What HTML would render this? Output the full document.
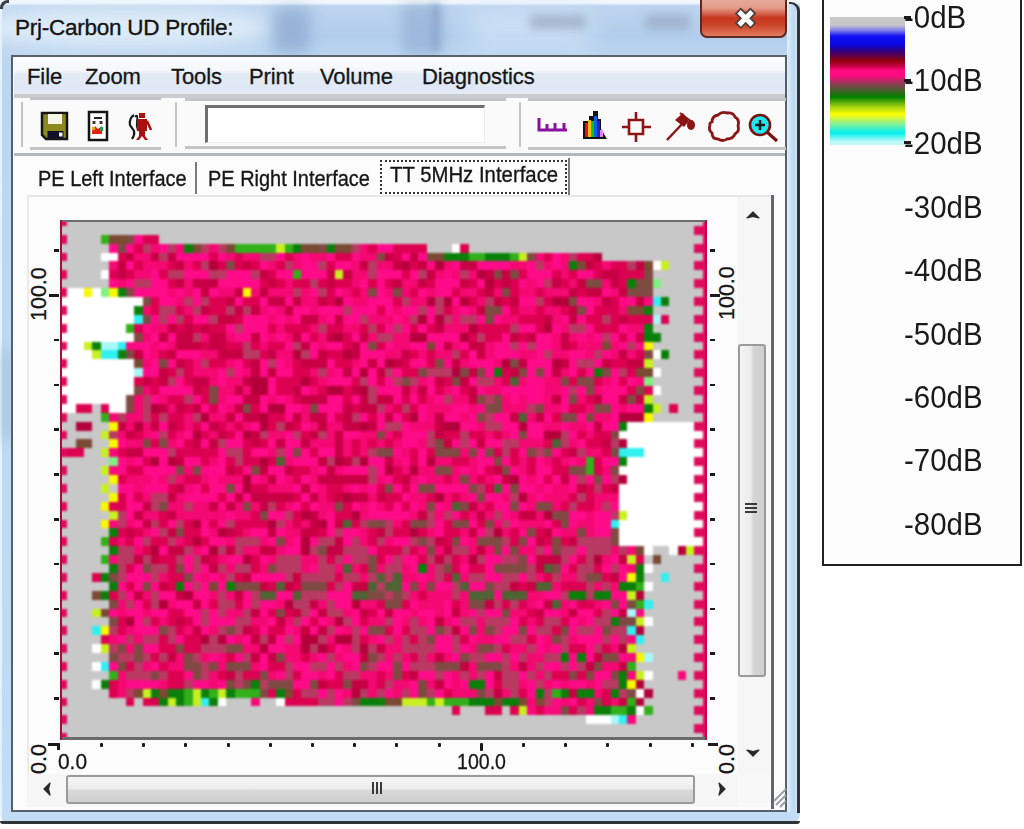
<!DOCTYPE html>
<html><head><meta charset="utf-8">
<style>
*{margin:0;padding:0;box-sizing:border-box}
html,body{width:1024px;height:829px;overflow:hidden;background:#fff;font-family:"Liberation Sans",sans-serif;color:#1a1a1a}
.a{position:absolute}
#frame{left:0px;top:-10px;width:800px;height:834px;border-radius:10px;
 background:linear-gradient(180deg,#f2f7fc 0px,#f2f7fc 13px,#bcd4ee 16px,#b2cdec 45px,#bcd6f0 66px,#c2dcf4 100%);overflow:hidden}
#title{left:15px;top:15px;font-size:22.5px;color:#141414;letter-spacing:-0.25px;-webkit-text-stroke:0.35px #141414}
#close{left:700px;top:-4px;width:87px;height:42px;border:2px solid #5b2a22;border-top:none;border-radius:0 0 7px 7px;
 background:linear-gradient(180deg,#eab0a2 0%,#e49a88 30%,#d2604a 45%,#c8361e 55%,#cc4428 72%,#e27a5c 100%)}
#client{left:11px;top:55px;width:776px;height:757px;border:2.5px solid #56616c;background:#fbfbfb}
#menu{left:13.5px;top:57.5px;width:771px;height:36px;background:linear-gradient(180deg,#fcfdfe 0%,#f4f7fb 35%,#e2eaf5 45%,#dfe8f4 85%,#e6edf7 100%)}
.mi{top:64px;font-size:22px;color:#161616;letter-spacing:-0.1px;-webkit-text-stroke:0.3px #161616}
.gl{position:absolute;background:#c4c4c4}
.tab{position:absolute;font-size:22px;color:#161616;-webkit-text-stroke:0.35px #161616;transform-origin:0 0;transform:scaleX(0.86);white-space:nowrap}
.lab{position:absolute;font-size:21px;color:#161616;-webkit-text-stroke:0.3px #161616;transform-origin:0 0;white-space:nowrap}
.db{position:absolute;font-size:32px;color:#1a1a1a;transform-origin:0 0;transform:scaleX(0.92);white-space:nowrap;left:904px;margin-top:-1.5px}
.tk{position:absolute;background:#1a1a1a}
</style></head><body>
<div id="wrap" style="position:absolute;left:0;top:0;width:1024px;height:829px;overflow:hidden;filter:blur(0.45px)">
<div id="frame" class="a">
 <div class="a" style="left:0;top:0;width:2px;height:100%;background:#e6f2fb"></div>
 <div class="a" style="left:0;top:10px;width:800px;height:3px;background:#f2f7fc"></div>
 <div class="a" style="left:-20px;top:18px;width:290px;height:40px;background:#e4f0fa;filter:blur(10px);opacity:.9;border-radius:40%"></div>
 <div class="a" style="left:274px;top:18px;width:36px;height:45px;background:#8eaad0;filter:blur(7px);opacity:.75"></div>
 <div class="a" style="left:402px;top:15px;width:40px;height:50px;background:#94b0d4;filter:blur(6px);opacity:.7"></div>
 <div class="a" style="left:431px;top:14px;width:9px;height:46px;background:#86a2c8;filter:blur(3px);opacity:.6"></div>
 <div class="a" style="left:470px;top:18px;width:120px;height:40px;background:#d4e6f8;filter:blur(12px);opacity:.7"></div>
 <div class="a" style="left:530px;top:25px;width:55px;height:14px;background:#8c9cb4;filter:blur(5px);opacity:.6"></div>
 <div class="a" style="left:645px;top:25px;width:45px;height:14px;background:#8c9cb4;filter:blur(5px);opacity:.55"></div>
 <div class="a" style="left:0;top:360px;width:12px;height:90px;background:#94b2d4;filter:blur(8px);opacity:.6"></div>
 <div class="a" style="left:776px;top:300px;width:22px;height:110px;background:#9ab8da;filter:blur(8px);opacity:.6"></div>
</div>
<div class="a" style="left:787px;top:4px;width:10px;height:808px;background:linear-gradient(90deg,#e2f0fa 0%,#c6def4 45%,#bcd8f0 80%,#d6eaf8 100%)"></div>
<div class="a" style="left:789px;top:1.5px;width:11px;height:811px;border-right:3px solid #2e3338;border-top:2.5px solid #2e3338;border-top-right-radius:9px"></div>
<div class="a" style="left:0;top:821px;width:800px;height:3px;background:#2e3338;border-radius:0 0 4px 4px"></div>
<div class="a" style="left:0;top:0;width:9px;height:9px;border-top:3px solid #3a3f44;border-left:3px solid #3a3f44;border-radius:8px 0 0 0"></div>
<div class="a" id="title">Prj-Carbon UD Profile:</div>
<div id="close" class="a"><svg width="87" height="40" style="position:absolute;left:-2px;top:4px" viewBox="0 0 87 40">
<path d="M40.8 13.5 L50.4 23.1 M50.4 13.5 L40.8 23.1" stroke="#4a3e3c" stroke-width="8.5" stroke-linecap="square" fill="none"/>
<path d="M40.8 13.5 L50.4 23.1 M50.4 13.5 L40.8 23.1" stroke="#fff" stroke-width="5" stroke-linecap="square" fill="none"/></svg></div>
<div id="client" class="a"></div>
<div id="menu" class="a"></div>
<div class="a" style="left:13.5px;top:93.5px;width:771px;height:4.5px;background:#c9cdd2"></div>
<div class="a mi" style="left:27px">File</div>
<div class="a mi" style="left:85px">Zoom</div>
<div class="a mi" style="left:171px">Tools</div>
<div class="a mi" style="left:249px">Print</div>
<div class="a mi" style="left:320px">Volume</div>
<div class="a mi" style="left:422px">Diagnostics</div>

<!-- toolbar -->
<div class="a" style="left:13.5px;top:98px;width:771px;height:54px;background:#fafafa"></div>
<div class="gl" style="left:30px;top:97px;width:131px;height:3px"></div>
<div class="gl" style="left:30px;top:147px;width:131px;height:3px"></div>
<div class="gl" style="left:20.5px;top:102px;width:2.5px;height:45px"></div>
<div class="gl" style="left:174.5px;top:102px;width:2.5px;height:45px"></div>
<div class="gl" style="left:185px;top:98px;width:321px;height:3px"></div>
<div class="gl" style="left:185px;top:146px;width:321px;height:3px"></div>
<div class="gl" style="left:518.5px;top:102px;width:2.5px;height:45px"></div>
<div class="gl" style="left:528px;top:98px;width:258px;height:3px"></div>
<div class="gl" style="left:528px;top:147px;width:258px;height:3px"></div>
<div class="a" style="left:205px;top:105px;width:280px;height:38px;background:#fff;border-top:3px solid #6e6e6e;border-left:3px solid #6e6e6e;border-right:1px solid #ececec;border-bottom:1px solid #ececec"></div>
<div class="a" style="left:13.5px;top:152.5px;width:771px;height:3px;background:#b4b8bc"></div>
<!-- toolbar icons -->
<svg class="a" style="left:38px;top:108px" width="122" height="36" viewBox="0 0 122 36">
 <path d="M4 5h25v26h-21l-4-4z" fill="#8a8a1e" stroke="#141414" stroke-width="2.5"/>
 <rect x="10" y="6" width="14" height="10" fill="#f4f4e8"/>
 <rect x="9.5" y="23" width="16" height="7" fill="#10102a"/>
 <rect x="21" y="24.5" width="3.5" height="4" fill="#f0f0e0"/>
 <rect x="51" y="4" width="18" height="28" fill="#fff" stroke="#141414" stroke-width="2.5"/>
 <rect x="56" y="9" width="8" height="2" fill="#222"/>
 <rect x="54.5" y="13" width="3" height="3" fill="#4a3a2a"/><rect x="61.5" y="13" width="3" height="3" fill="#4a3a2a"/>
 <path d="M54 23l3-5 3 3 4-3v8h-10z" fill="#e81e10"/><rect x="54" y="19" width="3" height="3" fill="#f0a000"/><rect x="62" y="19" width="3" height="4" fill="#20a040"/>
 <path d="M96 7q-5 3-4 10l4 6q1 4-2 8" stroke="#1a1a1a" stroke-width="2.2" fill="none"/>
 <path d="M97 9q3-4 2 4q-1 5 1 10" stroke="#1a1a1a" stroke-width="1.8" fill="none"/>
 <rect x="101" y="5" width="6" height="5" fill="#a81010"/>
 <path d="M99 11h10v12h-2v5l3 4h-3l-3-4-3 4h-3l3-4v-5h-2z" fill="#a81010"/>
 <path d="M109 13l4 9" stroke="#a81010" stroke-width="2.5"/>
</svg>
<svg class="a" style="left:534px;top:106px" width="250" height="38" viewBox="0 0 250 38">
 <path d="M5 12v12h28M5 24 M13 18v6M21 17v7M30 17v7" stroke="#8a10a0" stroke-width="3" fill="none"/>
 <path d="M49 33v-18h6v-5h4v-5h5v8h3v10l6 10z" fill="#111"/>
 <rect x="51" y="17" width="3" height="14" fill="#f01010"/><rect x="54" y="14" width="3" height="17" fill="#f0c000"/>
 <rect x="57" y="15" width="3" height="16" fill="#10c010"/><rect x="60" y="10" width="3" height="21" fill="#1060f0"/>
 <rect x="63" y="15" width="3" height="16" fill="#2020c0"/><rect x="66" y="24" width="3" height="7" fill="#f080f0"/>
 <path d="M95 14h14v14h-14z M102 6v8 M102 28v8 M88 21h7 M109 21h8" stroke="#8b1414" stroke-width="2.6" fill="none"/>
 <path d="M133 34l16-17" stroke="#8b1414" stroke-width="2.5"/>
 <path d="M141 14l8-7 6 8-5 6z" fill="#8b1414"/>
 <path d="M146 7l12 9" stroke="#8b1414" stroke-width="2"/><ellipse cx="157" cy="19" rx="4" ry="5" fill="#8b1414"/>
 <path d="M178 16q0-6 6-7q4-4 9-2q6-1 8 4q5 3 3 9q2 5-3 8q-2 5-8 5q-4 3-9 0q-6 0-6-6q-4-3-2-8q-1-2 2-3z" stroke="#8b1414" stroke-width="2.8" fill="none"/>
 <circle cx="226" cy="19" r="10" fill="#20e8f0" stroke="#7a1010" stroke-width="2.6"/>
 <path d="M221 19h10M226 14v10" stroke="#1a1a1a" stroke-width="2.5"/>
 <path d="M233 26l10 9" stroke="#7a1010" stroke-width="3.2"/>
</svg>

<!-- tab strip & page -->
<div class="a" style="left:13.5px;top:155.5px;width:771px;height:653px;background:#fcfcfc"></div>
<div class="a" style="left:194.5px;top:162px;width:2.5px;height:32px;background:#7a7a7a"></div>
<div class="a" style="left:567.5px;top:158px;width:2.5px;height:37px;background:#7a7a7a"></div>
<div class="a" style="left:380px;top:160px;width:187px;height:34px;border:2px dotted #333"></div>
<div class="a" style="left:27px;top:195px;width:746px;height:2px;background:#e6e6e6"></div>
<div class="a" style="left:27px;top:195px;width:2px;height:612px;background:#ebebeb"></div>
<div class="a" style="left:770.5px;top:195px;width:3px;height:614px;background:#62676d"></div>
<div class="tab" style="left:38px;top:166px;transform:scaleX(0.907)">PE Left Interface</div>
<div class="tab" style="left:207.5px;top:166px;transform:scaleX(0.907)">PE Right Interface</div>
<div class="tab" style="left:390px;top:162px;transform:scaleX(0.925)">TT 5MHz Interface</div>

<!-- plot -->
<div class="a" style="left:60px;top:221px;width:647px;height:519px;overflow:hidden;background:#c8c8c8">
<svg class="a" style="left:-1.5px;top:-4.2px;filter:blur(0.9px)" width="652.08" height="525.1" viewBox="0 0 78 59" preserveAspectRatio="none" shape-rendering="crispEdges">
<path fill="#de0a5c" d="M0 0h1v1h-1zM77 0h1v1h-1zM76 1h2v1h-2zM0 2h1v1h-1zM77 2h1v1h-1zM76 3h2v1h-2zM0 4h1v1h-1zM77 4h1v1h-1zM76 5h2v1h-2zM0 6h1v1h-1zM77 6h1v1h-1zM76 7h2v1h-2zM0 8h1v1h-1zM77 8h1v1h-1zM76 9h2v1h-2zM0 10h1v1h-1zM77 10h1v1h-1zM76 11h2v1h-2zM0 12h1v1h-1zM77 12h1v1h-1zM76 13h2v1h-2zM0 14h1v1h-1zM77 14h1v1h-1zM76 15h2v1h-2zM0 16h1v1h-1zM77 16h1v1h-1zM76 17h2v1h-2zM0 18h1v1h-1zM77 18h1v1h-1zM76 19h2v1h-2zM0 20h1v1h-1zM77 20h1v1h-1zM76 21h2v1h-2zM0 22h1v1h-1zM77 22h1v1h-1zM76 23h2v1h-2zM0 24h1v1h-1zM77 24h1v1h-1zM76 25h2v1h-2zM0 26h1v1h-1zM77 26h1v1h-1zM76 27h2v1h-2zM0 28h1v1h-1zM77 28h1v1h-1zM76 29h2v1h-2zM0 30h1v1h-1zM77 30h1v1h-1zM76 31h2v1h-2zM0 32h1v1h-1zM77 32h1v1h-1zM76 33h2v1h-2zM0 34h1v1h-1zM77 34h1v1h-1zM76 35h2v1h-2zM0 36h1v1h-1zM77 36h1v1h-1zM76 37h2v1h-2zM0 38h1v1h-1zM77 38h1v1h-1zM76 39h2v1h-2zM0 40h1v1h-1zM77 40h1v1h-1zM76 41h2v1h-2zM0 42h1v1h-1zM77 42h1v1h-1zM76 43h2v1h-2zM0 44h1v1h-1zM77 44h1v1h-1zM76 45h2v1h-2zM0 46h1v1h-1zM77 46h1v1h-1zM76 47h2v1h-2zM0 48h1v1h-1zM77 48h1v1h-1zM76 49h2v1h-2zM0 50h1v1h-1zM77 50h1v1h-1zM76 51h2v1h-2zM0 52h1v1h-1zM77 52h1v1h-1zM76 53h2v1h-2zM0 54h1v1h-1zM77 54h1v1h-1zM76 55h2v1h-2zM0 56h1v1h-1zM77 56h1v1h-1zM76 57h2v1h-2zM0 58h1v1h-1zM77 58h1v1h-1z"/>
<path fill="#c8c8c8" d="M1 0h76v1h-76zM0 1h76v1h-76zM1 2h4v1h-4zM12 2h65v1h-65zM0 3h6v1h-6zM44 3h3v1h-3zM49 3h27v1h-27zM1 4h4v1h-4zM65 4h12v1h-12zM0 5h6v1h-6zM73 5h3v1h-3zM1 6h4v1h-4zM71 6h6v1h-6zM0 7h6v1h-6zM72 7h4v1h-4zM71 8h6v1h-6zM73 9h3v1h-3zM71 10h6v1h-6zM73 11h3v1h-3zM71 12h6v1h-6zM72 13h4v1h-4zM71 14h6v1h-6zM73 15h3v1h-3zM71 16h6v1h-6zM72 17h4v1h-4zM71 18h6v1h-6zM72 19h4v1h-4zM71 20h6v1h-6zM4 21h1v1h-1zM72 21h1v1h-1zM74 21h2v1h-2zM1 22h4v1h-4zM71 22h6v1h-6zM0 23h2v1h-2zM4 23h2v1h-2zM1 24h4v1h-4zM0 25h2v1h-2zM4 25h2v1h-2zM3 26h2v1h-2zM0 27h6v1h-6zM1 28h4v1h-4zM0 29h6v1h-6zM1 30h4v1h-4zM6 30h1v1h-1zM0 31h6v1h-6zM1 32h4v1h-4zM0 33h6v1h-6zM1 34h4v1h-4zM0 35h6v1h-6zM1 36h4v1h-4zM0 37h6v1h-6zM71 37h2v1h-2zM1 38h4v1h-4zM70 38h1v1h-1zM72 38h5v1h-5zM0 39h6v1h-6zM71 39h5v1h-5zM1 40h3v1h-3zM70 40h2v1h-2zM73 40h4v1h-4zM0 41h6v1h-6zM71 41h5v1h-5zM1 42h3v1h-3zM70 42h7v1h-7zM0 43h6v1h-6zM71 43h5v1h-5zM1 44h3v1h-3zM70 44h7v1h-7zM0 45h6v1h-6zM71 45h5v1h-5zM1 46h3v1h-3zM70 46h7v1h-7zM0 47h5v1h-5zM70 47h6v1h-6zM1 48h3v1h-3zM69 48h8v1h-8zM0 49h6v1h-6zM71 49h5v1h-5zM1 50h3v1h-3zM69 50h8v1h-8zM0 51h6v1h-6zM71 51h3v1h-3zM75 51h1v1h-1zM1 52h3v1h-3zM70 52h7v1h-7zM0 53h6v1h-6zM71 53h5v1h-5zM1 54h7v1h-7zM9 54h1v1h-1zM20 54h3v1h-3zM24 54h2v1h-2zM70 54h7v1h-7zM0 55h47v1h-47zM48 55h3v1h-3zM53 55h1v1h-1zM71 55h5v1h-5zM1 56h62v1h-62zM69 56h8v1h-8zM0 57h76v1h-76zM1 58h76v1h-76z"/>
<path fill="#32b01a" d="M5 2h1v1h-1zM21 3h5v1h-5zM27 3h1v1h-1zM49 4h2v1h-2zM54 4h1v1h-1zM28 6h1v1h-1zM8 12h1v1h-1zM5 22h1v1h-1zM63 27h1v1h-1zM63 28h1v1h-1zM5 36h1v1h-1zM5 38h1v1h-1zM69 41h1v1h-1zM69 43h1v1h-1zM68 50h1v1h-1zM6 51h1v1h-1zM15 53h1v1h-1zM18 53h1v1h-1zM21 53h3v1h-3zM59 53h1v1h-1zM15 54h1v1h-1zM44 54h1v1h-1zM46 54h3v1h-3zM68 54h1v1h-1zM66 55h2v1h-2zM70 55h1v1h-1z"/>
<path fill="#7a4a32" d="M6 2h2v1h-2zM16 3h1v1h-1zM20 3h1v1h-1zM29 3h2v1h-2zM33 3h2v1h-2zM44 4h2v1h-2zM62 5h1v1h-1zM70 5h1v1h-1zM68 10h2v1h-2zM44 14h1v1h-1zM65 14h1v1h-1zM9 16h1v1h-1zM69 17h2v1h-2zM2 25h2v1h-2zM69 37h1v1h-1zM71 38h1v1h-1zM18 41h1v1h-1zM4 42h1v1h-1zM5 44h1v1h-1zM9 53h1v1h-1zM12 53h1v1h-1zM27 53h1v1h-1zM39 54h2v1h-2zM52 54h1v1h-1zM55 54h1v1h-1zM57 54h1v1h-1z"/>
<path fill="#7e4a42" d="M8 2h1v1h-1zM7 3h1v1h-1zM31 3h1v1h-1zM38 4h1v1h-1zM56 4h1v1h-1zM20 5h1v1h-1zM52 6h1v1h-1zM54 6h1v1h-1zM70 6h1v1h-1zM63 7h2v1h-2zM69 7h2v1h-2zM8 8h1v1h-1zM37 8h1v1h-1zM40 8h1v1h-1zM53 8h1v1h-1zM68 8h3v1h-3zM10 9h1v1h-1zM61 9h1v1h-1zM51 10h2v1h-2zM62 10h1v1h-1zM10 11h1v1h-1zM51 11h1v1h-1zM9 13h1v1h-1zM37 14h1v1h-1zM8 15h1v1h-1zM70 15h1v1h-1zM12 16h1v1h-1zM45 16h1v1h-1zM54 16h1v1h-1zM43 17h1v1h-1zM48 17h1v1h-1zM50 17h1v1h-1zM55 17h1v1h-1zM57 17h1v1h-1zM65 17h1v1h-1zM41 18h1v1h-1zM47 18h1v1h-1zM60 18h1v1h-1zM62 18h2v1h-2zM9 19h1v1h-1zM18 19h1v1h-1zM63 19h1v1h-1zM69 19h1v1h-1zM8 20h1v1h-1zM18 20h1v1h-1zM50 20h1v1h-1zM52 20h1v1h-1zM61 20h1v1h-1zM68 20h1v1h-1zM8 21h1v1h-1zM22 21h1v1h-1zM30 21h1v1h-1zM51 21h2v1h-2zM57 21h1v1h-1zM64 21h2v1h-2zM50 22h1v1h-1zM60 22h2v1h-2zM63 22h1v1h-1zM38 24h1v1h-1zM55 24h1v1h-1zM66 24h1v1h-1zM10 25h1v1h-1zM12 25h1v1h-1zM45 25h1v1h-1zM28 26h1v1h-1zM38 26h2v1h-2zM45 26h3v1h-3zM49 26h1v1h-1zM51 26h1v1h-1zM56 26h1v1h-1zM58 26h1v1h-1zM66 26h1v1h-1zM52 27h1v1h-1zM14 28h1v1h-1zM16 28h1v1h-1zM23 28h1v1h-1zM45 28h2v1h-2zM53 28h1v1h-1zM61 28h2v1h-2zM66 28h1v1h-1zM48 29h1v1h-1zM64 29h1v1h-1zM20 30h1v1h-1zM39 30h1v1h-1zM43 30h2v1h-2zM49 30h1v1h-1zM54 30h1v1h-1zM50 31h1v1h-1zM12 32h1v1h-1zM22 32h1v1h-1zM33 32h1v1h-1zM44 32h1v1h-1zM48 32h1v1h-1zM54 32h1v1h-1zM57 32h2v1h-2zM24 33h1v1h-1zM59 33h2v1h-2zM37 34h2v1h-2zM42 34h2v1h-2zM47 34h2v1h-2zM51 34h1v1h-1zM60 34h1v1h-1zM14 35h1v1h-1zM56 35h1v1h-1zM62 35h1v1h-1zM66 35h1v1h-1zM26 36h1v1h-1zM43 36h1v1h-1zM47 36h1v1h-1zM50 36h3v1h-3zM55 36h1v1h-1zM59 36h1v1h-1zM66 36h1v1h-1zM31 37h1v1h-1zM44 37h1v1h-1zM52 37h1v1h-1zM54 37h1v1h-1zM59 37h1v1h-1zM37 38h1v1h-1zM55 38h1v1h-1zM10 39h1v1h-1zM14 39h1v1h-1zM25 39h1v1h-1zM37 39h1v1h-1zM46 39h1v1h-1zM52 39h4v1h-4zM59 39h1v1h-1zM6 40h1v1h-1zM15 40h1v1h-1zM63 40h2v1h-2zM10 41h1v1h-1zM21 41h3v1h-3zM29 41h3v1h-3zM42 41h1v1h-1zM44 41h1v1h-1zM51 41h1v1h-1zM37 42h2v1h-2zM40 42h1v1h-1zM6 43h1v1h-1zM39 43h2v1h-2zM49 43h2v1h-2zM66 43h1v1h-1zM68 43h1v1h-1zM26 44h1v1h-1zM53 44h1v1h-1zM6 45h1v1h-1zM67 45h2v1h-2zM12 46h1v1h-1zM20 46h1v1h-1zM37 46h2v1h-2zM45 46h1v1h-1zM49 46h1v1h-1zM51 46h1v1h-1zM55 46h1v1h-1zM60 46h1v1h-1zM65 46h1v1h-1zM44 47h1v1h-1zM59 47h1v1h-1zM7 48h1v1h-1zM9 48h1v1h-1zM14 48h1v1h-1zM20 48h2v1h-2zM50 48h2v1h-2zM6 49h1v1h-1zM9 49h1v1h-1zM15 49h1v1h-1zM26 49h1v1h-1zM37 49h1v1h-1zM48 49h1v1h-1zM65 49h2v1h-2zM7 50h1v1h-1zM15 50h2v1h-2zM18 50h1v1h-1zM20 50h3v1h-3zM36 50h1v1h-1zM40 50h1v1h-1zM45 50h3v1h-3zM50 50h3v1h-3zM64 50h1v1h-1zM11 51h1v1h-1zM16 51h1v1h-1zM24 51h1v1h-1zM40 51h1v1h-1zM61 51h1v1h-1zM63 51h1v1h-1zM66 51h1v1h-1zM20 52h1v1h-1zM22 52h1v1h-1zM25 52h3v1h-3zM30 52h1v1h-1zM34 52h1v1h-1zM43 52h1v1h-1zM24 53h1v1h-1zM43 53h1v1h-1zM50 53h1v1h-1zM68 53h1v1h-1zM35 54h1v1h-1zM64 54h1v1h-1zM60 55h1v1h-1z"/>
<path fill="#ff0a88" d="M9 2h1v1h-1zM6 3h1v1h-1zM8 3h1v1h-1zM12 3h1v1h-1zM38 3h2v1h-2zM14 4h4v1h-4zM19 4h1v1h-1zM26 4h1v1h-1zM29 4h1v1h-1zM32 4h1v1h-1zM35 4h1v1h-1zM41 4h1v1h-1zM43 4h1v1h-1zM59 4h1v1h-1zM8 5h1v1h-1zM24 5h1v1h-1zM29 5h2v1h-2zM33 5h2v1h-2zM44 5h1v1h-1zM47 5h1v1h-1zM50 5h4v1h-4zM56 5h1v1h-1zM59 5h1v1h-1zM11 6h1v1h-1zM15 6h3v1h-3zM20 6h3v1h-3zM26 6h2v1h-2zM29 6h3v1h-3zM38 6h3v1h-3zM42 6h1v1h-1zM46 6h1v1h-1zM56 6h3v1h-3zM62 6h2v1h-2zM6 7h1v1h-1zM8 7h1v1h-1zM11 7h2v1h-2zM19 7h5v1h-5zM36 7h1v1h-1zM38 7h1v1h-1zM45 7h3v1h-3zM50 7h1v1h-1zM55 7h1v1h-1zM57 7h1v1h-1zM9 8h4v1h-4zM14 8h1v1h-1zM16 8h1v1h-1zM18 8h1v1h-1zM30 8h1v1h-1zM33 8h1v1h-1zM38 8h1v1h-1zM43 8h1v1h-1zM45 8h2v1h-2zM65 8h1v1h-1zM12 9h2v1h-2zM16 9h1v1h-1zM21 9h1v1h-1zM24 9h1v1h-1zM27 9h1v1h-1zM34 9h1v1h-1zM37 9h3v1h-3zM47 9h1v1h-1zM55 9h2v1h-2zM62 9h2v1h-2zM67 9h2v1h-2zM25 10h1v1h-1zM28 10h2v1h-2zM31 10h3v1h-3zM35 10h3v1h-3zM39 10h1v1h-1zM41 10h2v1h-2zM44 10h1v1h-1zM48 10h1v1h-1zM53 10h1v1h-1zM63 10h1v1h-1zM11 11h1v1h-1zM13 11h1v1h-1zM16 11h2v1h-2zM22 11h3v1h-3zM26 11h1v1h-1zM28 11h1v1h-1zM32 11h1v1h-1zM34 11h2v1h-2zM40 11h1v1h-1zM44 11h1v1h-1zM50 11h1v1h-1zM52 11h1v1h-1zM60 11h1v1h-1zM62 11h1v1h-1zM10 12h1v1h-1zM20 12h1v1h-1zM22 12h3v1h-3zM39 12h1v1h-1zM41 12h1v1h-1zM43 12h1v1h-1zM55 12h2v1h-2zM59 12h1v1h-1zM63 12h1v1h-1zM67 12h1v1h-1zM11 13h1v1h-1zM13 13h1v1h-1zM21 13h2v1h-2zM24 13h1v1h-1zM26 13h1v1h-1zM29 13h1v1h-1zM35 13h1v1h-1zM44 13h4v1h-4zM53 13h1v1h-1zM57 13h2v1h-2zM62 13h1v1h-1zM64 13h1v1h-1zM66 13h1v1h-1zM68 13h1v1h-1zM9 14h2v1h-2zM12 14h1v1h-1zM27 14h1v1h-1zM30 14h1v1h-1zM32 14h2v1h-2zM36 14h1v1h-1zM39 14h1v1h-1zM42 14h2v1h-2zM45 14h1v1h-1zM48 14h1v1h-1zM52 14h2v1h-2zM55 14h1v1h-1zM57 14h2v1h-2zM67 14h1v1h-1zM69 14h1v1h-1zM10 15h1v1h-1zM14 15h3v1h-3zM30 15h1v1h-1zM36 15h3v1h-3zM49 15h1v1h-1zM52 15h3v1h-3zM57 15h1v1h-1zM61 15h2v1h-2zM65 15h1v1h-1zM11 16h1v1h-1zM13 16h1v1h-1zM21 16h1v1h-1zM24 16h1v1h-1zM26 16h1v1h-1zM32 16h1v1h-1zM36 16h1v1h-1zM38 16h1v1h-1zM42 16h2v1h-2zM46 16h1v1h-1zM49 16h3v1h-3zM56 16h3v1h-3zM61 16h1v1h-1zM64 16h1v1h-1zM10 17h2v1h-2zM19 17h1v1h-1zM21 17h1v1h-1zM24 17h1v1h-1zM26 17h2v1h-2zM33 17h1v1h-1zM35 17h1v1h-1zM37 17h1v1h-1zM40 17h1v1h-1zM51 17h1v1h-1zM56 17h1v1h-1zM58 17h1v1h-1zM61 17h1v1h-1zM63 17h1v1h-1zM66 17h1v1h-1zM14 18h1v1h-1zM19 18h1v1h-1zM25 18h1v1h-1zM32 18h3v1h-3zM37 18h1v1h-1zM39 18h1v1h-1zM44 18h1v1h-1zM49 18h1v1h-1zM56 18h2v1h-2zM66 18h1v1h-1zM68 18h1v1h-1zM12 19h4v1h-4zM25 19h1v1h-1zM29 19h1v1h-1zM38 19h3v1h-3zM44 19h1v1h-1zM47 19h1v1h-1zM50 19h1v1h-1zM53 19h5v1h-5zM60 19h1v1h-1zM62 19h1v1h-1zM65 19h3v1h-3zM11 20h1v1h-1zM16 20h1v1h-1zM20 20h2v1h-2zM24 20h1v1h-1zM26 20h1v1h-1zM32 20h2v1h-2zM35 20h1v1h-1zM40 20h1v1h-1zM42 20h1v1h-1zM45 20h1v1h-1zM54 20h1v1h-1zM56 20h2v1h-2zM60 20h1v1h-1zM65 20h2v1h-2zM17 21h1v1h-1zM19 21h1v1h-1zM24 21h1v1h-1zM27 21h2v1h-2zM31 21h3v1h-3zM43 21h1v1h-1zM47 21h2v1h-2zM50 21h1v1h-1zM60 21h1v1h-1zM66 21h1v1h-1zM68 21h2v1h-2zM21 22h1v1h-1zM27 22h1v1h-1zM32 22h1v1h-1zM36 22h1v1h-1zM38 22h1v1h-1zM40 22h1v1h-1zM43 22h1v1h-1zM46 22h2v1h-2zM49 22h1v1h-1zM52 22h2v1h-2zM58 22h1v1h-1zM62 22h1v1h-1zM66 22h1v1h-1zM12 23h1v1h-1zM17 23h1v1h-1zM23 23h1v1h-1zM29 23h1v1h-1zM38 23h1v1h-1zM41 23h1v1h-1zM48 23h2v1h-2zM53 23h2v1h-2zM56 23h2v1h-2zM60 23h1v1h-1zM63 23h1v1h-1zM65 23h2v1h-2zM11 24h1v1h-1zM15 24h1v1h-1zM21 24h1v1h-1zM27 24h1v1h-1zM34 24h2v1h-2zM41 24h3v1h-3zM54 24h1v1h-1zM56 24h2v1h-2zM61 24h1v1h-1zM7 25h1v1h-1zM14 25h1v1h-1zM17 25h1v1h-1zM20 25h2v1h-2zM25 25h1v1h-1zM27 25h2v1h-2zM41 25h2v1h-2zM47 25h1v1h-1zM49 25h1v1h-1zM51 25h2v1h-2zM62 25h1v1h-1zM10 26h3v1h-3zM19 26h1v1h-1zM23 26h2v1h-2zM27 26h1v1h-1zM29 26h1v1h-1zM31 26h2v1h-2zM40 26h1v1h-1zM43 26h1v1h-1zM50 26h1v1h-1zM55 26h1v1h-1zM59 26h1v1h-1zM7 27h1v1h-1zM9 27h1v1h-1zM12 27h1v1h-1zM15 27h2v1h-2zM19 27h1v1h-1zM28 27h3v1h-3zM37 27h2v1h-2zM41 27h1v1h-1zM43 27h1v1h-1zM50 27h2v1h-2zM53 27h1v1h-1zM57 27h1v1h-1zM61 27h1v1h-1zM65 27h2v1h-2zM7 28h1v1h-1zM10 28h4v1h-4zM17 28h3v1h-3zM22 28h1v1h-1zM25 28h2v1h-2zM31 28h1v1h-1zM34 28h3v1h-3zM38 28h1v1h-1zM48 28h1v1h-1zM50 28h1v1h-1zM54 28h1v1h-1zM57 28h2v1h-2zM11 29h1v1h-1zM18 29h1v1h-1zM23 29h1v1h-1zM26 29h1v1h-1zM29 29h1v1h-1zM39 29h1v1h-1zM43 29h1v1h-1zM52 29h1v1h-1zM55 29h1v1h-1zM57 29h1v1h-1zM59 29h1v1h-1zM61 29h1v1h-1zM63 29h1v1h-1zM65 29h1v1h-1zM7 30h2v1h-2zM10 30h3v1h-3zM16 30h1v1h-1zM18 30h2v1h-2zM21 30h1v1h-1zM28 30h1v1h-1zM30 30h1v1h-1zM35 30h1v1h-1zM37 30h1v1h-1zM40 30h1v1h-1zM42 30h1v1h-1zM45 30h4v1h-4zM53 30h1v1h-1zM55 30h2v1h-2zM58 30h1v1h-1zM61 30h1v1h-1zM8 31h1v1h-1zM15 31h4v1h-4zM20 31h1v1h-1zM22 31h1v1h-1zM29 31h1v1h-1zM41 31h1v1h-1zM49 31h1v1h-1zM51 31h2v1h-2zM57 31h1v1h-1zM8 32h2v1h-2zM19 32h1v1h-1zM28 32h1v1h-1zM30 32h1v1h-1zM35 32h1v1h-1zM37 32h1v1h-1zM40 32h1v1h-1zM42 32h1v1h-1zM45 32h1v1h-1zM52 32h2v1h-2zM55 32h1v1h-1zM66 32h1v1h-1zM8 33h1v1h-1zM20 33h1v1h-1zM25 33h2v1h-2zM32 33h1v1h-1zM37 33h5v1h-5zM47 33h1v1h-1zM53 33h1v1h-1zM61 33h2v1h-2zM64 33h2v1h-2zM9 34h1v1h-1zM13 34h1v1h-1zM17 34h1v1h-1zM19 34h1v1h-1zM32 34h1v1h-1zM45 34h1v1h-1zM49 34h1v1h-1zM54 34h1v1h-1zM58 34h1v1h-1zM61 34h1v1h-1zM64 34h2v1h-2zM11 35h1v1h-1zM17 35h1v1h-1zM23 35h2v1h-2zM26 35h1v1h-1zM32 35h1v1h-1zM34 35h2v1h-2zM45 35h1v1h-1zM50 35h1v1h-1zM55 35h1v1h-1zM59 35h1v1h-1zM64 35h2v1h-2zM9 36h1v1h-1zM18 36h2v1h-2zM25 36h1v1h-1zM28 36h1v1h-1zM30 36h1v1h-1zM34 36h1v1h-1zM40 36h2v1h-2zM48 36h1v1h-1zM56 36h1v1h-1zM12 37h1v1h-1zM17 37h1v1h-1zM27 37h2v1h-2zM37 37h1v1h-1zM53 37h1v1h-1zM58 37h1v1h-1zM62 37h1v1h-1zM15 38h1v1h-1zM20 38h2v1h-2zM24 38h1v1h-1zM34 38h1v1h-1zM39 38h1v1h-1zM41 38h2v1h-2zM51 38h2v1h-2zM56 38h1v1h-1zM61 38h1v1h-1zM66 38h1v1h-1zM9 39h1v1h-1zM15 39h1v1h-1zM17 39h1v1h-1zM30 39h1v1h-1zM42 39h1v1h-1zM48 39h1v1h-1zM51 39h1v1h-1zM60 39h1v1h-1zM65 39h1v1h-1zM67 39h1v1h-1zM8 40h3v1h-3zM16 40h1v1h-1zM18 40h1v1h-1zM23 40h4v1h-4zM43 40h1v1h-1zM51 40h2v1h-2zM55 40h1v1h-1zM67 40h1v1h-1zM7 41h1v1h-1zM9 41h1v1h-1zM11 41h1v1h-1zM15 41h1v1h-1zM17 41h1v1h-1zM19 41h1v1h-1zM34 41h1v1h-1zM41 41h1v1h-1zM45 41h2v1h-2zM49 41h2v1h-2zM8 42h1v1h-1zM12 42h2v1h-2zM16 42h2v1h-2zM22 42h1v1h-1zM26 42h2v1h-2zM32 42h3v1h-3zM52 42h1v1h-1zM58 42h2v1h-2zM66 42h2v1h-2zM9 43h1v1h-1zM14 43h2v1h-2zM17 43h1v1h-1zM22 43h1v1h-1zM24 43h2v1h-2zM33 43h2v1h-2zM42 43h1v1h-1zM46 43h1v1h-1zM57 43h1v1h-1zM61 43h1v1h-1zM65 43h1v1h-1zM67 43h1v1h-1zM6 44h1v1h-1zM8 44h2v1h-2zM11 44h2v1h-2zM15 44h2v1h-2zM18 44h1v1h-1zM24 44h1v1h-1zM30 44h1v1h-1zM35 44h1v1h-1zM38 44h1v1h-1zM40 44h2v1h-2zM43 44h2v1h-2zM46 44h1v1h-1zM49 44h1v1h-1zM51 44h2v1h-2zM58 44h2v1h-2zM62 44h2v1h-2zM66 44h1v1h-1zM9 45h1v1h-1zM16 45h1v1h-1zM18 45h3v1h-3zM25 45h1v1h-1zM29 45h1v1h-1zM31 45h1v1h-1zM35 45h1v1h-1zM40 45h1v1h-1zM44 45h1v1h-1zM47 45h1v1h-1zM54 45h1v1h-1zM61 45h1v1h-1zM63 45h1v1h-1zM9 46h3v1h-3zM17 46h1v1h-1zM24 46h1v1h-1zM27 46h1v1h-1zM30 46h1v1h-1zM33 46h1v1h-1zM36 46h1v1h-1zM40 46h1v1h-1zM44 46h1v1h-1zM48 46h1v1h-1zM53 46h2v1h-2zM56 46h1v1h-1zM61 46h1v1h-1zM64 46h1v1h-1zM7 47h1v1h-1zM14 47h1v1h-1zM20 47h1v1h-1zM22 47h1v1h-1zM26 47h1v1h-1zM28 47h1v1h-1zM38 47h1v1h-1zM45 47h2v1h-2zM49 47h1v1h-1zM52 47h2v1h-2zM57 47h1v1h-1zM62 47h3v1h-3zM66 47h1v1h-1zM10 48h2v1h-2zM25 48h2v1h-2zM33 48h1v1h-1zM45 48h2v1h-2zM48 48h1v1h-1zM57 48h1v1h-1zM59 48h1v1h-1zM63 48h1v1h-1zM18 49h1v1h-1zM21 49h1v1h-1zM24 49h1v1h-1zM31 49h1v1h-1zM34 49h2v1h-2zM47 49h1v1h-1zM51 49h2v1h-2zM54 49h1v1h-1zM61 49h1v1h-1zM63 49h1v1h-1zM67 49h1v1h-1zM6 50h1v1h-1zM11 50h1v1h-1zM24 50h1v1h-1zM28 50h2v1h-2zM32 50h1v1h-1zM35 50h1v1h-1zM38 50h2v1h-2zM41 50h1v1h-1zM58 50h2v1h-2zM61 50h1v1h-1zM15 51h1v1h-1zM26 51h1v1h-1zM29 51h2v1h-2zM32 51h1v1h-1zM43 51h2v1h-2zM46 51h1v1h-1zM51 51h1v1h-1zM55 51h1v1h-1zM64 51h2v1h-2zM8 52h4v1h-4zM16 52h2v1h-2zM19 52h1v1h-1zM28 52h2v1h-2zM42 52h1v1h-1zM46 52h1v1h-1zM48 52h1v1h-1zM51 52h1v1h-1zM56 52h1v1h-1zM59 52h1v1h-1zM61 52h2v1h-2zM64 52h1v1h-1zM31 53h1v1h-1zM33 53h1v1h-1zM39 53h1v1h-1zM42 53h1v1h-1zM45 53h1v1h-1zM56 53h1v1h-1zM33 54h1v1h-1zM59 54h1v1h-1zM61 54h1v1h-1z"/>
<path fill="#dc0050" d="M10 2h2v1h-2zM9 3h1v1h-1zM37 3h1v1h-1zM7 4h1v1h-1zM18 4h1v1h-1zM21 4h1v1h-1zM27 4h1v1h-1zM33 4h2v1h-2zM40 4h1v1h-1zM58 4h1v1h-1zM62 4h2v1h-2zM9 5h1v1h-1zM13 5h1v1h-1zM16 5h1v1h-1zM19 5h1v1h-1zM21 5h1v1h-1zM23 5h1v1h-1zM26 5h1v1h-1zM32 5h1v1h-1zM42 5h1v1h-1zM64 5h1v1h-1zM66 5h2v1h-2zM6 6h1v1h-1zM8 6h1v1h-1zM12 6h1v1h-1zM25 6h1v1h-1zM41 6h1v1h-1zM55 6h1v1h-1zM59 6h1v1h-1zM61 6h1v1h-1zM64 6h1v1h-1zM67 6h3v1h-3zM13 7h1v1h-1zM24 7h1v1h-1zM26 7h1v1h-1zM28 7h2v1h-2zM31 7h1v1h-1zM33 7h2v1h-2zM37 7h1v1h-1zM39 7h1v1h-1zM44 7h1v1h-1zM49 7h1v1h-1zM52 7h1v1h-1zM54 7h1v1h-1zM60 7h1v1h-1zM67 7h1v1h-1zM32 8h1v1h-1zM35 8h1v1h-1zM42 8h1v1h-1zM47 8h1v1h-1zM50 8h1v1h-1zM54 8h1v1h-1zM57 8h1v1h-1zM62 8h1v1h-1zM11 9h1v1h-1zM18 9h2v1h-2zM22 9h2v1h-2zM32 9h1v1h-1zM40 9h1v1h-1zM49 9h1v1h-1zM53 9h1v1h-1zM58 9h1v1h-1zM66 9h1v1h-1zM11 10h1v1h-1zM14 10h1v1h-1zM18 10h2v1h-2zM38 10h1v1h-1zM46 10h1v1h-1zM54 10h1v1h-1zM57 10h1v1h-1zM60 10h1v1h-1zM64 10h3v1h-3zM15 11h1v1h-1zM21 11h1v1h-1zM55 11h3v1h-3zM63 11h2v1h-2zM66 11h1v1h-1zM68 11h2v1h-2zM9 12h1v1h-1zM14 12h1v1h-1zM16 12h1v1h-1zM18 12h2v1h-2zM25 12h1v1h-1zM27 12h3v1h-3zM32 12h2v1h-2zM36 12h1v1h-1zM38 12h1v1h-1zM42 12h1v1h-1zM44 12h1v1h-1zM50 12h4v1h-4zM57 12h1v1h-1zM64 12h3v1h-3zM30 13h1v1h-1zM34 13h1v1h-1zM49 13h1v1h-1zM51 13h2v1h-2zM55 13h1v1h-1zM67 13h1v1h-1zM17 14h1v1h-1zM20 14h2v1h-2zM23 14h1v1h-1zM25 14h2v1h-2zM34 14h1v1h-1zM38 14h1v1h-1zM61 14h1v1h-1zM12 15h1v1h-1zM24 15h1v1h-1zM32 15h2v1h-2zM42 15h1v1h-1zM44 15h1v1h-1zM48 15h1v1h-1zM69 15h1v1h-1zM15 16h1v1h-1zM18 16h2v1h-2zM22 16h1v1h-1zM28 16h1v1h-1zM33 16h2v1h-2zM41 16h1v1h-1zM44 16h1v1h-1zM66 16h2v1h-2zM13 17h1v1h-1zM15 17h1v1h-1zM28 17h2v1h-2zM41 17h2v1h-2zM53 17h1v1h-1zM62 17h1v1h-1zM68 17h1v1h-1zM11 18h1v1h-1zM15 18h1v1h-1zM26 18h3v1h-3zM30 18h1v1h-1zM35 18h1v1h-1zM38 18h1v1h-1zM46 18h1v1h-1zM53 18h1v1h-1zM61 18h1v1h-1zM64 18h1v1h-1zM67 18h1v1h-1zM11 19h1v1h-1zM17 19h1v1h-1zM26 19h2v1h-2zM31 19h1v1h-1zM34 19h1v1h-1zM45 19h1v1h-1zM48 19h1v1h-1zM68 19h1v1h-1zM13 20h2v1h-2zM17 20h1v1h-1zM28 20h1v1h-1zM34 20h1v1h-1zM41 20h1v1h-1zM43 20h1v1h-1zM63 20h1v1h-1zM15 21h1v1h-1zM18 21h1v1h-1zM23 21h1v1h-1zM35 21h1v1h-1zM40 21h1v1h-1zM42 21h1v1h-1zM61 21h2v1h-2zM11 22h1v1h-1zM13 22h2v1h-2zM25 22h2v1h-2zM33 22h1v1h-1zM37 22h1v1h-1zM41 22h1v1h-1zM59 22h1v1h-1zM14 23h1v1h-1zM16 23h1v1h-1zM19 23h1v1h-1zM21 23h1v1h-1zM25 23h1v1h-1zM28 23h1v1h-1zM9 24h1v1h-1zM13 24h1v1h-1zM17 24h1v1h-1zM20 24h1v1h-1zM29 24h1v1h-1zM40 24h1v1h-1zM46 24h2v1h-2zM49 24h2v1h-2zM52 24h1v1h-1zM62 24h1v1h-1zM64 24h2v1h-2zM11 25h1v1h-1zM15 25h1v1h-1zM22 25h1v1h-1zM24 25h1v1h-1zM35 25h1v1h-1zM37 25h1v1h-1zM39 25h1v1h-1zM58 25h1v1h-1zM63 25h2v1h-2zM7 26h1v1h-1zM14 26h5v1h-5zM22 26h1v1h-1zM30 26h1v1h-1zM35 26h1v1h-1zM42 26h1v1h-1zM44 26h1v1h-1zM52 26h1v1h-1zM54 26h1v1h-1zM60 26h1v1h-1zM65 26h1v1h-1zM10 27h1v1h-1zM17 27h1v1h-1zM20 27h1v1h-1zM22 27h2v1h-2zM25 27h1v1h-1zM42 27h1v1h-1zM47 27h2v1h-2zM54 27h1v1h-1zM56 27h1v1h-1zM59 27h1v1h-1zM64 27h1v1h-1zM8 28h2v1h-2zM21 28h1v1h-1zM28 28h2v1h-2zM40 28h1v1h-1zM51 28h1v1h-1zM56 28h1v1h-1zM59 28h2v1h-2zM64 28h1v1h-1zM7 29h1v1h-1zM15 29h2v1h-2zM28 29h1v1h-1zM40 29h1v1h-1zM46 29h1v1h-1zM50 29h1v1h-1zM58 29h1v1h-1zM13 30h1v1h-1zM17 30h1v1h-1zM23 30h2v1h-2zM32 30h2v1h-2zM38 30h1v1h-1zM41 30h1v1h-1zM51 30h1v1h-1zM63 30h1v1h-1zM65 30h1v1h-1zM7 31h1v1h-1zM9 31h1v1h-1zM19 31h1v1h-1zM28 31h1v1h-1zM32 31h1v1h-1zM39 31h2v1h-2zM44 31h1v1h-1zM47 31h1v1h-1zM61 31h1v1h-1zM63 31h1v1h-1zM7 32h1v1h-1zM26 32h1v1h-1zM29 32h1v1h-1zM34 32h1v1h-1zM39 32h1v1h-1zM41 32h1v1h-1zM51 32h1v1h-1zM60 32h1v1h-1zM62 32h2v1h-2zM12 33h1v1h-1zM23 33h1v1h-1zM28 33h1v1h-1zM33 33h2v1h-2zM48 33h1v1h-1zM12 34h1v1h-1zM15 34h1v1h-1zM18 34h1v1h-1zM21 34h4v1h-4zM28 34h1v1h-1zM35 34h1v1h-1zM41 34h1v1h-1zM46 34h1v1h-1zM50 34h1v1h-1zM59 34h1v1h-1zM7 35h1v1h-1zM9 35h1v1h-1zM15 35h2v1h-2zM21 35h1v1h-1zM31 35h1v1h-1zM37 35h1v1h-1zM40 35h2v1h-2zM43 35h1v1h-1zM46 35h2v1h-2zM54 35h1v1h-1zM57 35h1v1h-1zM8 36h1v1h-1zM11 36h2v1h-2zM15 36h1v1h-1zM17 36h1v1h-1zM37 36h1v1h-1zM46 36h1v1h-1zM54 36h1v1h-1zM58 36h1v1h-1zM60 36h1v1h-1zM10 37h1v1h-1zM38 37h3v1h-3zM42 37h1v1h-1zM12 38h2v1h-2zM18 38h1v1h-1zM23 38h1v1h-1zM32 38h1v1h-1zM38 38h1v1h-1zM43 38h1v1h-1zM47 38h1v1h-1zM62 38h1v1h-1zM8 39h1v1h-1zM13 39h1v1h-1zM23 39h1v1h-1zM36 39h1v1h-1zM47 39h1v1h-1zM49 39h2v1h-2zM61 39h1v1h-1zM64 39h1v1h-1zM13 40h2v1h-2zM21 40h1v1h-1zM33 40h1v1h-1zM46 40h1v1h-1zM58 40h1v1h-1zM65 40h1v1h-1zM8 41h1v1h-1zM13 41h1v1h-1zM25 41h1v1h-1zM28 41h1v1h-1zM32 41h1v1h-1zM55 41h1v1h-1zM60 41h3v1h-3zM43 42h1v1h-1zM10 43h1v1h-1zM18 43h1v1h-1zM21 43h1v1h-1zM38 43h1v1h-1zM41 43h1v1h-1zM47 43h1v1h-1zM53 43h1v1h-1zM55 43h1v1h-1zM62 43h2v1h-2zM13 44h2v1h-2zM25 44h1v1h-1zM27 44h1v1h-1zM37 44h1v1h-1zM56 44h1v1h-1zM64 44h1v1h-1zM7 45h1v1h-1zM11 45h1v1h-1zM13 45h1v1h-1zM15 45h1v1h-1zM30 45h1v1h-1zM36 45h1v1h-1zM55 45h1v1h-1zM57 45h1v1h-1zM60 45h1v1h-1zM7 46h1v1h-1zM14 46h1v1h-1zM23 46h1v1h-1zM25 46h2v1h-2zM39 46h1v1h-1zM41 46h1v1h-1zM59 46h1v1h-1zM12 47h1v1h-1zM15 47h2v1h-2zM36 47h1v1h-1zM42 47h1v1h-1zM48 47h1v1h-1zM56 47h1v1h-1zM12 48h2v1h-2zM15 48h2v1h-2zM32 48h1v1h-1zM53 48h1v1h-1zM61 48h2v1h-2zM65 48h1v1h-1zM11 49h1v1h-1zM20 49h1v1h-1zM29 49h1v1h-1zM42 49h1v1h-1zM8 50h1v1h-1zM12 50h1v1h-1zM25 50h2v1h-2zM13 51h2v1h-2zM19 51h1v1h-1zM22 51h2v1h-2zM28 51h1v1h-1zM33 51h1v1h-1zM38 51h1v1h-1zM41 51h1v1h-1zM59 51h2v1h-2zM62 51h1v1h-1zM13 52h2v1h-2zM32 52h2v1h-2zM38 52h1v1h-1zM52 52h1v1h-1zM6 53h1v1h-1zM28 53h1v1h-1zM46 53h1v1h-1zM55 53h1v1h-1zM65 53h1v1h-1zM30 54h1v1h-1zM62 54h1v1h-1zM65 54h1v1h-1zM61 55h1v1h-1z"/>
<path fill="#b83a62" d="M10 3h1v1h-1zM13 3h1v1h-1zM17 3h1v1h-1zM19 3h1v1h-1zM35 3h1v1h-1zM12 4h1v1h-1zM24 4h2v1h-2zM61 4h1v1h-1zM17 5h1v1h-1zM27 5h1v1h-1zM31 5h1v1h-1zM37 5h1v1h-1zM57 5h1v1h-1zM68 5h1v1h-1zM13 6h2v1h-2zM18 6h2v1h-2zM23 6h1v1h-1zM37 6h1v1h-1zM43 6h1v1h-1zM48 6h1v1h-1zM9 7h2v1h-2zM30 7h1v1h-1zM58 7h1v1h-1zM28 8h1v1h-1zM31 8h1v1h-1zM15 9h1v1h-1zM17 9h1v1h-1zM41 9h1v1h-1zM45 9h1v1h-1zM51 9h1v1h-1zM57 9h1v1h-1zM12 10h2v1h-2zM16 10h1v1h-1zM20 10h1v1h-1zM22 10h1v1h-1zM34 10h1v1h-1zM43 10h1v1h-1zM45 10h1v1h-1zM12 11h1v1h-1zM14 11h1v1h-1zM18 11h1v1h-1zM36 11h1v1h-1zM42 11h1v1h-1zM46 11h1v1h-1zM48 11h2v1h-2zM65 11h1v1h-1zM21 12h1v1h-1zM31 12h1v1h-1zM37 12h1v1h-1zM40 12h1v1h-1zM54 12h1v1h-1zM61 12h2v1h-2zM16 13h1v1h-1zM38 13h2v1h-2zM50 13h1v1h-1zM65 13h1v1h-1zM22 14h1v1h-1zM28 14h1v1h-1zM54 14h1v1h-1zM56 14h1v1h-1zM68 14h1v1h-1zM22 15h2v1h-2zM29 15h1v1h-1zM47 15h1v1h-1zM58 15h1v1h-1zM64 15h1v1h-1zM17 16h1v1h-1zM25 16h1v1h-1zM62 16h2v1h-2zM14 17h1v1h-1zM20 17h1v1h-1zM31 17h1v1h-1zM39 17h1v1h-1zM44 17h3v1h-3zM67 17h1v1h-1zM13 18h1v1h-1zM36 18h1v1h-1zM40 18h1v1h-1zM42 18h1v1h-1zM50 18h2v1h-2zM37 19h1v1h-1zM61 19h1v1h-1zM10 20h1v1h-1zM15 20h1v1h-1zM37 20h1v1h-1zM46 20h1v1h-1zM51 20h1v1h-1zM10 21h1v1h-1zM38 21h1v1h-1zM41 21h1v1h-1zM56 21h1v1h-1zM7 22h1v1h-1zM10 22h1v1h-1zM12 22h1v1h-1zM16 22h1v1h-1zM35 22h1v1h-1zM51 22h1v1h-1zM26 23h1v1h-1zM39 23h2v1h-2zM51 23h2v1h-2zM6 24h1v1h-1zM12 24h1v1h-1zM24 24h1v1h-1zM28 24h1v1h-1zM31 24h1v1h-1zM44 24h1v1h-1zM48 24h1v1h-1zM60 24h1v1h-1zM19 25h1v1h-1zM44 25h1v1h-1zM48 25h1v1h-1zM53 25h2v1h-2zM60 25h1v1h-1zM66 25h1v1h-1zM13 26h1v1h-1zM20 26h2v1h-2zM26 26h1v1h-1zM37 26h1v1h-1zM53 26h1v1h-1zM57 26h1v1h-1zM62 26h1v1h-1zM21 27h1v1h-1zM32 27h1v1h-1zM35 27h1v1h-1zM37 28h1v1h-1zM13 29h1v1h-1zM37 29h1v1h-1zM62 29h1v1h-1zM66 29h1v1h-1zM50 30h1v1h-1zM64 30h1v1h-1zM11 31h2v1h-2zM54 31h1v1h-1zM62 31h1v1h-1zM11 32h1v1h-1zM15 32h1v1h-1zM25 32h1v1h-1zM61 32h1v1h-1zM65 32h1v1h-1zM7 33h1v1h-1zM27 33h1v1h-1zM44 33h1v1h-1zM46 33h1v1h-1zM52 33h1v1h-1zM66 33h1v1h-1zM7 34h1v1h-1zM11 34h1v1h-1zM14 34h1v1h-1zM20 34h1v1h-1zM26 34h1v1h-1zM36 34h1v1h-1zM39 34h1v1h-1zM44 34h1v1h-1zM53 34h1v1h-1zM12 35h1v1h-1zM33 35h1v1h-1zM39 35h1v1h-1zM51 35h1v1h-1zM10 36h1v1h-1zM13 36h1v1h-1zM21 36h3v1h-3zM31 36h2v1h-2zM35 36h1v1h-1zM38 36h1v1h-1zM42 36h1v1h-1zM44 36h1v1h-1zM53 36h1v1h-1zM62 36h4v1h-4zM7 37h2v1h-2zM15 37h1v1h-1zM19 37h1v1h-1zM21 37h1v1h-1zM30 37h1v1h-1zM34 37h3v1h-3zM41 37h1v1h-1zM47 37h2v1h-2zM57 37h1v1h-1zM60 37h2v1h-2zM63 37h3v1h-3zM67 37h1v1h-1zM7 38h2v1h-2zM10 38h1v1h-1zM14 38h1v1h-1zM16 38h1v1h-1zM26 38h3v1h-3zM31 38h1v1h-1zM33 38h1v1h-1zM35 38h2v1h-2zM40 38h1v1h-1zM44 38h1v1h-1zM46 38h1v1h-1zM50 38h1v1h-1zM53 38h2v1h-2zM60 38h1v1h-1zM63 38h1v1h-1zM7 39h1v1h-1zM11 39h2v1h-2zM16 39h1v1h-1zM19 39h1v1h-1zM21 39h2v1h-2zM26 39h3v1h-3zM31 39h2v1h-2zM39 39h2v1h-2zM45 39h1v1h-1zM56 39h1v1h-1zM62 39h2v1h-2zM66 39h1v1h-1zM7 40h1v1h-1zM11 40h1v1h-1zM20 40h1v1h-1zM27 40h1v1h-1zM29 40h4v1h-4zM34 40h2v1h-2zM37 40h1v1h-1zM39 40h1v1h-1zM45 40h1v1h-1zM49 40h2v1h-2zM53 40h2v1h-2zM56 40h1v1h-1zM59 40h1v1h-1zM62 40h1v1h-1zM16 41h1v1h-1zM33 41h1v1h-1zM38 41h1v1h-1zM47 41h1v1h-1zM52 41h2v1h-2zM63 41h1v1h-1zM65 41h1v1h-1zM7 42h1v1h-1zM11 42h1v1h-1zM19 42h1v1h-1zM23 42h1v1h-1zM29 42h3v1h-3zM39 42h1v1h-1zM41 42h1v1h-1zM47 42h1v1h-1zM60 42h1v1h-1zM63 42h1v1h-1zM8 43h1v1h-1zM11 43h1v1h-1zM19 43h2v1h-2zM23 43h1v1h-1zM28 43h2v1h-2zM32 43h1v1h-1zM52 43h1v1h-1zM54 43h1v1h-1zM17 44h1v1h-1zM19 44h1v1h-1zM22 44h1v1h-1zM29 44h1v1h-1zM32 44h2v1h-2zM50 44h1v1h-1zM65 44h1v1h-1zM10 45h1v1h-1zM17 45h1v1h-1zM21 45h2v1h-2zM28 45h1v1h-1zM34 45h1v1h-1zM39 45h1v1h-1zM42 45h1v1h-1zM48 45h2v1h-2zM51 45h3v1h-3zM58 45h2v1h-2zM64 45h2v1h-2zM6 46h1v1h-1zM13 46h1v1h-1zM19 46h1v1h-1zM21 46h1v1h-1zM32 46h1v1h-1zM35 46h1v1h-1zM42 46h2v1h-2zM46 46h1v1h-1zM52 46h1v1h-1zM57 46h2v1h-2zM62 46h2v1h-2zM66 46h2v1h-2zM8 47h1v1h-1zM10 47h2v1h-2zM13 47h1v1h-1zM18 47h1v1h-1zM24 47h1v1h-1zM27 47h1v1h-1zM31 47h1v1h-1zM35 47h1v1h-1zM39 47h1v1h-1zM41 47h1v1h-1zM43 47h1v1h-1zM47 47h1v1h-1zM54 47h2v1h-2zM60 47h1v1h-1zM65 47h1v1h-1zM67 47h1v1h-1zM6 48h1v1h-1zM17 48h3v1h-3zM30 48h1v1h-1zM35 48h1v1h-1zM37 48h1v1h-1zM41 48h4v1h-4zM47 48h1v1h-1zM52 48h1v1h-1zM56 48h1v1h-1zM60 48h1v1h-1zM64 48h1v1h-1zM7 49h2v1h-2zM10 49h1v1h-1zM12 49h1v1h-1zM16 49h1v1h-1zM22 49h1v1h-1zM32 49h1v1h-1zM38 49h1v1h-1zM40 49h1v1h-1zM43 49h1v1h-1zM49 49h2v1h-2zM53 49h1v1h-1zM55 49h1v1h-1zM58 49h2v1h-2zM9 50h1v1h-1zM17 50h1v1h-1zM27 50h1v1h-1zM30 50h2v1h-2zM33 50h1v1h-1zM37 50h1v1h-1zM42 50h3v1h-3zM53 50h1v1h-1zM57 50h1v1h-1zM60 50h1v1h-1zM62 50h1v1h-1zM8 51h3v1h-3zM12 51h1v1h-1zM17 51h1v1h-1zM21 51h1v1h-1zM27 51h1v1h-1zM34 51h2v1h-2zM45 51h1v1h-1zM48 51h1v1h-1zM50 51h1v1h-1zM53 51h2v1h-2zM56 51h1v1h-1zM58 51h1v1h-1zM15 52h1v1h-1zM21 52h1v1h-1zM24 52h1v1h-1zM39 52h1v1h-1zM53 52h2v1h-2zM57 52h1v1h-1zM65 52h2v1h-2zM8 53h1v1h-1zM29 53h2v1h-2zM32 53h1v1h-1zM36 53h1v1h-1zM38 53h1v1h-1zM41 53h1v1h-1zM44 53h1v1h-1zM51 53h1v1h-1zM54 53h1v1h-1zM58 53h1v1h-1zM67 53h1v1h-1zM31 54h2v1h-2zM34 54h1v1h-1zM58 54h1v1h-1zM62 55h1v1h-1z"/>
<path fill="#f40872" d="M11 3h1v1h-1zM14 3h1v1h-1zM18 3h1v1h-1zM36 3h1v1h-1zM9 4h2v1h-2zM20 4h1v1h-1zM22 4h2v1h-2zM28 4h1v1h-1zM30 4h2v1h-2zM36 4h2v1h-2zM57 4h1v1h-1zM60 4h1v1h-1zM6 5h1v1h-1zM10 5h3v1h-3zM15 5h1v1h-1zM25 5h1v1h-1zM28 5h1v1h-1zM35 5h1v1h-1zM38 5h2v1h-2zM46 5h1v1h-1zM54 5h2v1h-2zM58 5h1v1h-1zM60 5h1v1h-1zM65 5h1v1h-1zM9 6h2v1h-2zM35 6h2v1h-2zM45 6h1v1h-1zM47 6h1v1h-1zM49 6h1v1h-1zM60 6h1v1h-1zM7 7h1v1h-1zM15 7h1v1h-1zM27 7h1v1h-1zM35 7h1v1h-1zM41 7h2v1h-2zM56 7h1v1h-1zM61 7h1v1h-1zM65 7h1v1h-1zM13 8h1v1h-1zM15 8h1v1h-1zM19 8h2v1h-2zM23 8h1v1h-1zM25 8h3v1h-3zM29 8h1v1h-1zM34 8h1v1h-1zM36 8h1v1h-1zM39 8h1v1h-1zM41 8h1v1h-1zM44 8h1v1h-1zM48 8h2v1h-2zM52 8h1v1h-1zM55 8h2v1h-2zM58 8h3v1h-3zM66 8h1v1h-1zM14 9h1v1h-1zM29 9h2v1h-2zM35 9h2v1h-2zM42 9h2v1h-2zM50 9h1v1h-1zM64 9h1v1h-1zM10 10h1v1h-1zM15 10h1v1h-1zM24 10h1v1h-1zM26 10h1v1h-1zM30 10h1v1h-1zM40 10h1v1h-1zM47 10h1v1h-1zM49 10h1v1h-1zM55 10h2v1h-2zM58 10h2v1h-2zM67 10h1v1h-1zM25 11h1v1h-1zM27 11h1v1h-1zM31 11h1v1h-1zM37 11h3v1h-3zM41 11h1v1h-1zM47 11h1v1h-1zM53 11h2v1h-2zM59 11h1v1h-1zM11 12h2v1h-2zM26 12h1v1h-1zM30 12h1v1h-1zM34 12h2v1h-2zM46 12h3v1h-3zM60 12h1v1h-1zM68 12h2v1h-2zM10 13h1v1h-1zM17 13h1v1h-1zM20 13h1v1h-1zM25 13h1v1h-1zM27 13h1v1h-1zM31 13h1v1h-1zM37 13h1v1h-1zM40 13h2v1h-2zM59 13h1v1h-1zM61 13h1v1h-1zM63 13h1v1h-1zM11 14h1v1h-1zM13 14h1v1h-1zM24 14h1v1h-1zM31 14h1v1h-1zM40 14h2v1h-2zM47 14h1v1h-1zM51 14h1v1h-1zM59 14h1v1h-1zM62 14h3v1h-3zM66 14h1v1h-1zM11 15h1v1h-1zM17 15h2v1h-2zM26 15h2v1h-2zM39 15h2v1h-2zM43 15h1v1h-1zM45 15h2v1h-2zM51 15h1v1h-1zM55 15h2v1h-2zM59 15h2v1h-2zM63 15h1v1h-1zM66 15h1v1h-1zM68 15h1v1h-1zM10 16h1v1h-1zM16 16h1v1h-1zM20 16h1v1h-1zM27 16h1v1h-1zM35 16h1v1h-1zM48 16h1v1h-1zM52 16h1v1h-1zM16 17h3v1h-3zM22 17h1v1h-1zM30 17h1v1h-1zM32 17h1v1h-1zM60 17h1v1h-1zM18 18h1v1h-1zM20 18h2v1h-2zM31 18h1v1h-1zM43 18h1v1h-1zM52 18h1v1h-1zM55 18h1v1h-1zM58 18h2v1h-2zM65 18h1v1h-1zM69 18h1v1h-1zM10 19h1v1h-1zM19 19h2v1h-2zM22 19h1v1h-1zM30 19h1v1h-1zM42 19h1v1h-1zM46 19h1v1h-1zM51 19h2v1h-2zM58 19h2v1h-2zM64 19h1v1h-1zM9 20h1v1h-1zM12 20h1v1h-1zM19 20h1v1h-1zM25 20h1v1h-1zM27 20h1v1h-1zM44 20h1v1h-1zM47 20h2v1h-2zM53 20h1v1h-1zM55 20h1v1h-1zM58 20h1v1h-1zM62 20h1v1h-1zM9 21h1v1h-1zM13 21h1v1h-1zM20 21h1v1h-1zM29 21h1v1h-1zM39 21h1v1h-1zM44 21h3v1h-3zM49 21h1v1h-1zM53 21h3v1h-3zM58 21h2v1h-2zM63 21h1v1h-1zM67 21h1v1h-1zM6 22h1v1h-1zM8 22h2v1h-2zM15 22h1v1h-1zM18 22h2v1h-2zM29 22h1v1h-1zM44 22h1v1h-1zM48 22h1v1h-1zM56 22h1v1h-1zM64 22h2v1h-2zM8 23h1v1h-1zM10 23h1v1h-1zM15 23h1v1h-1zM20 23h1v1h-1zM22 23h1v1h-1zM30 23h1v1h-1zM32 23h2v1h-2zM42 23h3v1h-3zM50 23h1v1h-1zM58 23h2v1h-2zM61 23h2v1h-2zM7 24h1v1h-1zM10 24h1v1h-1zM14 24h1v1h-1zM18 24h1v1h-1zM25 24h2v1h-2zM32 24h1v1h-1zM36 24h2v1h-2zM39 24h1v1h-1zM51 24h1v1h-1zM53 24h1v1h-1zM63 24h1v1h-1zM8 25h2v1h-2zM13 25h1v1h-1zM30 25h3v1h-3zM34 25h1v1h-1zM36 25h1v1h-1zM38 25h1v1h-1zM40 25h1v1h-1zM43 25h1v1h-1zM55 25h3v1h-3zM61 25h1v1h-1zM25 26h1v1h-1zM34 26h1v1h-1zM36 26h1v1h-1zM41 26h1v1h-1zM48 26h1v1h-1zM63 26h2v1h-2zM8 27h1v1h-1zM18 27h1v1h-1zM27 27h1v1h-1zM40 27h1v1h-1zM45 27h2v1h-2zM49 27h1v1h-1zM55 27h1v1h-1zM58 27h1v1h-1zM60 27h1v1h-1zM62 27h1v1h-1zM15 28h1v1h-1zM30 28h1v1h-1zM33 28h1v1h-1zM41 28h1v1h-1zM43 28h2v1h-2zM47 28h1v1h-1zM49 28h1v1h-1zM55 28h1v1h-1zM65 28h1v1h-1zM8 29h3v1h-3zM12 29h1v1h-1zM14 29h1v1h-1zM17 29h1v1h-1zM19 29h3v1h-3zM24 29h1v1h-1zM27 29h1v1h-1zM30 29h1v1h-1zM38 29h1v1h-1zM42 29h1v1h-1zM44 29h2v1h-2zM47 29h1v1h-1zM49 29h1v1h-1zM51 29h1v1h-1zM56 29h1v1h-1zM9 30h1v1h-1zM15 30h1v1h-1zM25 30h3v1h-3zM31 30h1v1h-1zM34 30h1v1h-1zM36 30h1v1h-1zM57 30h1v1h-1zM59 30h2v1h-2zM10 31h1v1h-1zM14 31h1v1h-1zM31 31h1v1h-1zM37 31h1v1h-1zM42 31h2v1h-2zM46 31h1v1h-1zM48 31h1v1h-1zM53 31h1v1h-1zM56 31h1v1h-1zM58 31h3v1h-3zM64 31h3v1h-3zM13 32h2v1h-2zM16 32h2v1h-2zM21 32h1v1h-1zM23 32h1v1h-1zM27 32h1v1h-1zM31 32h2v1h-2zM36 32h1v1h-1zM38 32h1v1h-1zM43 32h1v1h-1zM46 32h1v1h-1zM50 32h1v1h-1zM56 32h1v1h-1zM59 32h1v1h-1zM64 32h1v1h-1zM10 33h2v1h-2zM14 33h6v1h-6zM21 33h2v1h-2zM31 33h1v1h-1zM36 33h1v1h-1zM42 33h1v1h-1zM45 33h1v1h-1zM49 33h1v1h-1zM51 33h1v1h-1zM54 33h1v1h-1zM57 33h1v1h-1zM63 33h1v1h-1zM8 34h1v1h-1zM27 34h1v1h-1zM29 34h1v1h-1zM40 34h1v1h-1zM52 34h1v1h-1zM55 34h3v1h-3zM62 34h2v1h-2zM10 35h1v1h-1zM18 35h1v1h-1zM22 35h1v1h-1zM27 35h2v1h-2zM36 35h1v1h-1zM44 35h1v1h-1zM48 35h1v1h-1zM53 35h1v1h-1zM60 35h2v1h-2zM63 35h1v1h-1zM7 36h1v1h-1zM14 36h1v1h-1zM20 36h1v1h-1zM24 36h1v1h-1zM27 36h1v1h-1zM36 36h1v1h-1zM39 36h1v1h-1zM49 36h1v1h-1zM9 37h1v1h-1zM16 37h1v1h-1zM22 37h2v1h-2zM26 37h1v1h-1zM43 37h1v1h-1zM45 37h1v1h-1zM49 37h1v1h-1zM51 37h1v1h-1zM55 37h2v1h-2zM66 37h1v1h-1zM68 37h1v1h-1zM19 38h1v1h-1zM25 38h1v1h-1zM29 38h2v1h-2zM48 38h1v1h-1zM65 38h1v1h-1zM20 39h1v1h-1zM24 39h1v1h-1zM29 39h1v1h-1zM33 39h1v1h-1zM35 39h1v1h-1zM38 39h1v1h-1zM41 39h1v1h-1zM44 39h1v1h-1zM68 39h1v1h-1zM12 40h1v1h-1zM17 40h1v1h-1zM19 40h1v1h-1zM36 40h1v1h-1zM41 40h2v1h-2zM44 40h1v1h-1zM48 40h1v1h-1zM57 40h1v1h-1zM60 40h2v1h-2zM43 41h1v1h-1zM59 41h1v1h-1zM64 41h1v1h-1zM66 41h1v1h-1zM10 42h1v1h-1zM18 42h1v1h-1zM20 42h1v1h-1zM42 42h1v1h-1zM44 42h3v1h-3zM48 42h1v1h-1zM56 42h2v1h-2zM7 43h1v1h-1zM13 43h1v1h-1zM26 43h1v1h-1zM31 43h1v1h-1zM36 43h2v1h-2zM43 43h3v1h-3zM48 43h1v1h-1zM56 43h1v1h-1zM60 43h1v1h-1zM64 43h1v1h-1zM7 44h1v1h-1zM10 44h1v1h-1zM20 44h2v1h-2zM34 44h1v1h-1zM42 44h1v1h-1zM45 44h1v1h-1zM48 44h1v1h-1zM54 44h2v1h-2zM60 44h1v1h-1zM12 45h1v1h-1zM23 45h2v1h-2zM27 45h1v1h-1zM32 45h1v1h-1zM37 45h2v1h-2zM41 45h1v1h-1zM43 45h1v1h-1zM46 45h1v1h-1zM50 45h1v1h-1zM56 45h1v1h-1zM62 45h1v1h-1zM8 46h1v1h-1zM15 46h1v1h-1zM18 46h1v1h-1zM28 46h1v1h-1zM34 46h1v1h-1zM50 46h1v1h-1zM6 47h1v1h-1zM9 47h1v1h-1zM21 47h1v1h-1zM32 47h1v1h-1zM37 47h1v1h-1zM40 47h1v1h-1zM50 47h2v1h-2zM58 47h1v1h-1zM61 47h1v1h-1zM8 48h1v1h-1zM22 48h2v1h-2zM27 48h2v1h-2zM34 48h1v1h-1zM39 48h2v1h-2zM49 48h1v1h-1zM54 48h2v1h-2zM58 48h1v1h-1zM66 48h1v1h-1zM14 49h1v1h-1zM17 49h1v1h-1zM19 49h1v1h-1zM27 49h2v1h-2zM30 49h1v1h-1zM33 49h1v1h-1zM39 49h1v1h-1zM41 49h1v1h-1zM44 49h1v1h-1zM46 49h1v1h-1zM56 49h2v1h-2zM10 50h1v1h-1zM13 50h2v1h-2zM19 50h1v1h-1zM23 50h1v1h-1zM34 50h1v1h-1zM49 50h1v1h-1zM54 50h1v1h-1zM56 50h1v1h-1zM65 50h2v1h-2zM7 51h1v1h-1zM18 51h1v1h-1zM25 51h1v1h-1zM31 51h1v1h-1zM36 51h2v1h-2zM39 51h1v1h-1zM47 51h1v1h-1zM49 51h1v1h-1zM57 51h1v1h-1zM7 52h1v1h-1zM12 52h1v1h-1zM18 52h1v1h-1zM37 52h1v1h-1zM40 52h2v1h-2zM44 52h1v1h-1zM47 52h1v1h-1zM55 52h1v1h-1zM58 52h1v1h-1zM60 52h1v1h-1zM63 52h1v1h-1zM7 53h1v1h-1zM34 53h1v1h-1zM37 53h1v1h-1zM40 53h1v1h-1zM47 53h3v1h-3zM53 53h1v1h-1zM64 53h1v1h-1zM56 54h1v1h-1zM60 54h1v1h-1zM63 54h1v1h-1zM66 54h1v1h-1zM63 55h1v1h-1z"/>
<path fill="#0a800a" d="M15 3h1v1h-1zM28 3h1v1h-1zM32 3h1v1h-1zM46 4h3v1h-3zM51 4h3v1h-3zM61 5h1v1h-1zM68 7h1v1h-1zM7 8h1v1h-1zM72 9h1v1h-1zM9 10h1v1h-1zM70 10h1v1h-1zM70 12h1v1h-1zM70 13h2v1h-2zM4 14h1v1h-1zM7 15h1v1h-1zM72 15h1v1h-1zM52 17h1v1h-1zM64 17h1v1h-1zM70 21h1v1h-1zM67 23h1v1h-1zM67 27h1v1h-1zM6 35h1v1h-1zM6 37h1v1h-1zM6 39h1v1h-1zM43 39h1v1h-1zM69 39h1v1h-1zM5 40h1v1h-1zM69 40h1v1h-1zM6 41h1v1h-1zM14 41h1v1h-1zM20 41h1v1h-1zM67 41h2v1h-2zM5 42h1v1h-1zM61 42h2v1h-2zM64 42h2v1h-2zM66 45h1v1h-1zM60 49h1v1h-1zM62 49h1v1h-1zM67 51h1v1h-1zM5 52h1v1h-1zM23 52h1v1h-1zM49 52h2v1h-2zM67 52h1v1h-1zM11 53h1v1h-1zM13 53h2v1h-2zM17 53h1v1h-1zM20 53h1v1h-1zM26 53h1v1h-1zM57 53h1v1h-1zM60 53h1v1h-1zM62 53h2v1h-2zM66 53h1v1h-1zM12 54h1v1h-1zM14 54h1v1h-1zM18 54h1v1h-1zM36 54h3v1h-3zM49 54h3v1h-3zM53 54h2v1h-2zM64 55h2v1h-2zM68 55h1v1h-1z"/>
<path fill="#c8f020" d="M26 3h1v1h-1zM55 4h1v1h-1zM72 5h1v1h-1zM33 6h1v1h-1zM3 14h1v1h-1zM4 15h1v1h-1zM70 16h1v1h-1zM70 20h1v1h-1zM71 21h1v1h-1zM5 24h1v1h-1zM5 26h1v1h-1zM5 28h1v1h-1zM5 30h1v1h-1zM6 33h1v1h-1zM67 33h1v1h-1zM75 37h1v1h-1zM68 38h1v1h-1zM68 42h1v1h-1zM4 44h1v1h-1zM69 45h1v1h-1zM5 48h1v1h-1zM68 48h1v1h-1zM69 51h1v1h-1zM10 53h1v1h-1zM16 53h1v1h-1zM19 53h1v1h-1zM13 54h1v1h-1zM16 54h1v1h-1zM41 54h3v1h-3zM45 54h1v1h-1zM55 55h1v1h-1z"/>
<path fill="#dc0250" d="M40 3h4v1h-4zM48 3h1v1h-1zM70 11h1v1h-1zM72 11h1v1h-1zM9 18h1v1h-1zM70 19h1v1h-1zM2 21h2v1h-2zM5 21h1v1h-1zM73 21h1v1h-1zM1 26h2v1h-2zM6 32h1v1h-1zM6 36h1v1h-1zM69 38h1v1h-1zM4 40h1v1h-1zM6 42h1v1h-1zM5 47h1v1h-1zM6 52h1v1h-1zM25 53h1v1h-1zM8 54h1v1h-1zM10 54h2v1h-2zM27 54h3v1h-3zM47 55h1v1h-1zM51 55h2v1h-2zM54 55h1v1h-1zM57 55h1v1h-1z"/>
<path fill="#ffffff" d="M47 3h1v1h-1zM5 4h2v1h-2zM71 5h1v1h-1zM5 6h1v1h-1zM1 8h2v1h-2zM4 8h1v1h-1zM0 9h10v1h-10zM1 10h8v1h-8zM0 11h9v1h-9zM1 12h7v1h-7zM0 13h9v1h-9zM1 14h2v1h-2zM0 15h4v1h-4zM71 15h1v1h-1zM1 16h8v1h-8zM0 17h9v1h-9zM71 17h1v1h-1zM1 18h8v1h-8zM0 19h9v1h-9zM71 19h1v1h-1zM1 20h7v1h-7zM0 21h2v1h-2zM6 21h2v1h-2zM68 23h8v1h-8zM67 24h10v1h-10zM68 25h8v1h-8zM70 26h7v1h-7zM68 27h8v1h-8zM67 28h10v1h-10zM68 29h8v1h-8zM67 30h10v1h-10zM67 31h9v1h-9zM67 32h10v1h-10zM68 33h8v1h-8zM67 34h10v1h-10zM67 35h9v1h-9zM67 36h10v1h-10zM70 37h1v1h-1zM73 37h1v1h-1zM70 39h1v1h-1zM70 41h1v1h-1zM70 45h1v1h-1zM4 48h1v1h-1zM4 50h1v1h-1zM70 51h1v1h-1zM4 52h1v1h-1zM69 53h1v1h-1zM19 54h1v1h-1zM26 54h1v1h-1zM69 55h1v1h-1zM63 56h3v1h-3z"/>
<path fill="#c60042" d="M8 4h1v1h-1zM11 4h1v1h-1zM13 4h1v1h-1zM39 4h1v1h-1zM42 4h1v1h-1zM7 5h1v1h-1zM14 5h1v1h-1zM22 5h1v1h-1zM36 5h1v1h-1zM40 5h1v1h-1zM43 5h1v1h-1zM48 5h2v1h-2zM63 5h1v1h-1zM69 5h1v1h-1zM7 6h1v1h-1zM24 6h1v1h-1zM32 6h1v1h-1zM34 6h1v1h-1zM44 6h1v1h-1zM51 6h1v1h-1zM53 6h1v1h-1zM65 6h2v1h-2zM14 7h1v1h-1zM16 7h3v1h-3zM25 7h1v1h-1zM32 7h1v1h-1zM40 7h1v1h-1zM43 7h1v1h-1zM48 7h1v1h-1zM53 7h1v1h-1zM59 7h1v1h-1zM62 7h1v1h-1zM66 7h1v1h-1zM17 8h1v1h-1zM21 8h1v1h-1zM24 8h1v1h-1zM51 8h1v1h-1zM61 8h1v1h-1zM63 8h2v1h-2zM67 8h1v1h-1zM20 9h1v1h-1zM25 9h2v1h-2zM28 9h1v1h-1zM31 9h1v1h-1zM52 9h1v1h-1zM54 9h1v1h-1zM65 9h1v1h-1zM69 9h1v1h-1zM17 10h1v1h-1zM21 10h1v1h-1zM23 10h1v1h-1zM27 10h1v1h-1zM50 10h1v1h-1zM61 10h1v1h-1zM19 11h2v1h-2zM29 11h2v1h-2zM33 11h1v1h-1zM58 11h1v1h-1zM61 11h1v1h-1zM67 11h1v1h-1zM13 12h1v1h-1zM15 12h1v1h-1zM17 12h1v1h-1zM45 12h1v1h-1zM12 13h1v1h-1zM14 13h2v1h-2zM18 13h2v1h-2zM23 13h1v1h-1zM28 13h1v1h-1zM32 13h1v1h-1zM36 13h1v1h-1zM54 13h1v1h-1zM56 13h1v1h-1zM60 13h1v1h-1zM69 13h1v1h-1zM14 14h3v1h-3zM18 14h2v1h-2zM29 14h1v1h-1zM35 14h1v1h-1zM46 14h1v1h-1zM49 14h2v1h-2zM60 14h1v1h-1zM9 15h1v1h-1zM13 15h1v1h-1zM19 15h3v1h-3zM25 15h1v1h-1zM31 15h1v1h-1zM35 15h1v1h-1zM41 15h1v1h-1zM50 15h1v1h-1zM67 15h1v1h-1zM14 16h1v1h-1zM23 16h1v1h-1zM29 16h3v1h-3zM37 16h1v1h-1zM40 16h1v1h-1zM47 16h1v1h-1zM55 16h1v1h-1zM60 16h1v1h-1zM65 16h1v1h-1zM68 16h2v1h-2zM12 17h1v1h-1zM23 17h1v1h-1zM25 17h1v1h-1zM34 17h1v1h-1zM38 17h1v1h-1zM49 17h1v1h-1zM54 17h1v1h-1zM59 17h1v1h-1zM10 18h1v1h-1zM12 18h1v1h-1zM16 18h2v1h-2zM22 18h1v1h-1zM45 18h1v1h-1zM48 18h1v1h-1zM16 19h1v1h-1zM21 19h1v1h-1zM28 19h1v1h-1zM35 19h1v1h-1zM41 19h1v1h-1zM43 19h1v1h-1zM49 19h1v1h-1zM22 20h2v1h-2zM29 20h3v1h-3zM36 20h1v1h-1zM38 20h2v1h-2zM49 20h1v1h-1zM59 20h1v1h-1zM64 20h1v1h-1zM67 20h1v1h-1zM69 20h1v1h-1zM12 21h1v1h-1zM14 21h1v1h-1zM16 21h1v1h-1zM21 21h1v1h-1zM34 21h1v1h-1zM36 21h2v1h-2zM20 22h1v1h-1zM22 22h2v1h-2zM28 22h1v1h-1zM30 22h2v1h-2zM34 22h1v1h-1zM39 22h1v1h-1zM45 22h1v1h-1zM54 22h1v1h-1zM57 22h1v1h-1zM7 23h1v1h-1zM11 23h1v1h-1zM13 23h1v1h-1zM18 23h1v1h-1zM27 23h1v1h-1zM31 23h1v1h-1zM34 23h2v1h-2zM37 23h1v1h-1zM45 23h1v1h-1zM64 23h1v1h-1zM8 24h1v1h-1zM19 24h1v1h-1zM23 24h1v1h-1zM30 24h1v1h-1zM33 24h1v1h-1zM45 24h1v1h-1zM16 25h1v1h-1zM18 25h1v1h-1zM23 25h1v1h-1zM26 25h1v1h-1zM29 25h1v1h-1zM33 25h1v1h-1zM46 25h1v1h-1zM50 25h1v1h-1zM65 25h1v1h-1zM8 26h2v1h-2zM33 26h1v1h-1zM61 26h1v1h-1zM14 27h1v1h-1zM31 27h1v1h-1zM34 27h1v1h-1zM39 27h1v1h-1zM20 28h1v1h-1zM24 28h1v1h-1zM27 28h1v1h-1zM32 28h1v1h-1zM52 28h1v1h-1zM25 29h1v1h-1zM31 29h6v1h-6zM41 29h1v1h-1zM53 29h1v1h-1zM60 29h1v1h-1zM14 30h1v1h-1zM29 30h1v1h-1zM62 30h1v1h-1zM66 30h1v1h-1zM13 31h1v1h-1zM21 31h1v1h-1zM23 31h5v1h-5zM30 31h1v1h-1zM33 31h1v1h-1zM35 31h2v1h-2zM38 31h1v1h-1zM10 32h1v1h-1zM18 32h1v1h-1zM20 32h1v1h-1zM24 32h1v1h-1zM49 32h1v1h-1zM9 33h1v1h-1zM13 33h1v1h-1zM30 33h1v1h-1zM43 33h1v1h-1zM50 33h1v1h-1zM55 33h2v1h-2zM10 34h1v1h-1zM30 34h1v1h-1zM33 34h1v1h-1zM8 35h1v1h-1zM13 35h1v1h-1zM20 35h1v1h-1zM25 35h1v1h-1zM29 35h2v1h-2zM38 35h1v1h-1zM49 35h1v1h-1zM58 35h1v1h-1zM33 36h1v1h-1zM45 36h1v1h-1zM57 36h1v1h-1zM61 36h1v1h-1zM13 37h2v1h-2zM20 37h1v1h-1zM24 37h2v1h-2zM32 37h2v1h-2zM46 37h1v1h-1zM50 37h1v1h-1zM9 38h1v1h-1zM11 38h1v1h-1zM17 38h1v1h-1zM45 38h1v1h-1zM57 38h3v1h-3zM67 38h1v1h-1zM18 39h1v1h-1zM57 39h1v1h-1zM22 40h1v1h-1zM28 40h1v1h-1zM66 40h1v1h-1zM12 41h1v1h-1zM24 41h1v1h-1zM27 41h1v1h-1zM35 41h2v1h-2zM54 41h1v1h-1zM56 41h1v1h-1zM9 42h1v1h-1zM14 42h1v1h-1zM21 42h1v1h-1zM16 43h1v1h-1zM30 43h1v1h-1zM51 43h1v1h-1zM58 43h1v1h-1zM23 44h1v1h-1zM28 44h1v1h-1zM31 44h1v1h-1zM36 44h1v1h-1zM39 44h1v1h-1zM47 44h1v1h-1zM57 44h1v1h-1zM61 44h1v1h-1zM67 44h1v1h-1zM14 45h1v1h-1zM26 45h1v1h-1zM45 45h1v1h-1zM16 46h1v1h-1zM22 46h1v1h-1zM29 46h1v1h-1zM31 46h1v1h-1zM47 46h1v1h-1zM23 47h1v1h-1zM25 47h1v1h-1zM38 48h1v1h-1zM13 49h1v1h-1zM23 49h1v1h-1zM25 49h1v1h-1zM36 49h1v1h-1zM45 49h1v1h-1zM64 49h1v1h-1zM48 50h1v1h-1zM55 50h1v1h-1zM63 50h1v1h-1zM67 50h1v1h-1zM20 51h1v1h-1zM42 51h1v1h-1zM52 51h1v1h-1zM31 52h1v1h-1zM35 52h2v1h-2zM45 52h1v1h-1zM52 53h1v1h-1zM61 53h1v1h-1zM67 54h1v1h-1z"/>
<path fill="#b4003a" d="M64 4h1v1h-1zM18 5h1v1h-1zM41 5h1v1h-1zM45 5h1v1h-1zM50 6h1v1h-1zM51 7h1v1h-1zM33 9h1v1h-1zM44 9h1v1h-1zM46 9h1v1h-1zM48 9h1v1h-1zM59 9h2v1h-2zM43 11h1v1h-1zM45 11h1v1h-1zM49 12h1v1h-1zM58 12h1v1h-1zM33 13h1v1h-1zM42 13h2v1h-2zM48 13h1v1h-1zM28 15h1v1h-1zM34 15h1v1h-1zM39 16h1v1h-1zM53 16h1v1h-1zM59 16h1v1h-1zM36 17h1v1h-1zM47 17h1v1h-1zM23 18h2v1h-2zM29 18h1v1h-1zM23 19h2v1h-2zM32 19h2v1h-2zM36 19h1v1h-1zM11 21h1v1h-1zM25 21h2v1h-2zM17 22h1v1h-1zM24 22h1v1h-1zM42 22h1v1h-1zM67 22h3v1h-3zM2 23h2v1h-2zM9 23h1v1h-1zM24 23h1v1h-1zM36 23h1v1h-1zM46 23h2v1h-2zM55 23h1v1h-1zM16 24h1v1h-1zM22 24h1v1h-1zM58 24h2v1h-2zM67 25h1v1h-1zM11 27h1v1h-1zM13 27h1v1h-1zM24 27h1v1h-1zM33 27h1v1h-1zM36 27h1v1h-1zM44 27h1v1h-1zM39 28h1v1h-1zM42 28h1v1h-1zM22 29h1v1h-1zM54 29h1v1h-1zM67 29h1v1h-1zM22 30h1v1h-1zM34 31h1v1h-1zM45 31h1v1h-1zM55 31h1v1h-1zM29 33h1v1h-1zM35 33h1v1h-1zM58 33h1v1h-1zM16 34h1v1h-1zM25 34h1v1h-1zM31 34h1v1h-1zM19 35h1v1h-1zM42 35h1v1h-1zM52 35h1v1h-1zM16 36h1v1h-1zM29 36h1v1h-1zM11 37h1v1h-1zM18 37h1v1h-1zM29 37h1v1h-1zM74 37h1v1h-1zM22 38h1v1h-1zM49 38h1v1h-1zM64 38h1v1h-1zM15 42h1v1h-1zM69 42h1v1h-1zM12 43h1v1h-1zM27 43h1v1h-1zM35 43h1v1h-1zM8 45h1v1h-1zM33 45h1v1h-1zM69 46h1v1h-1zM17 47h1v1h-1zM19 47h1v1h-1zM29 47h2v1h-2zM33 47h2v1h-2zM24 48h1v1h-1zM29 48h1v1h-1zM31 48h1v1h-1zM36 48h1v1h-1zM67 48h1v1h-1zM69 52h1v1h-1zM35 53h1v1h-1zM70 53h1v1h-1zM69 54h1v1h-1z"/>
<path fill="#80f080" d="M71 7h1v1h-1zM5 8h1v1h-1zM70 18h1v1h-1zM6 27h1v1h-1z"/>
<path fill="#f8f800" d="M3 8h1v1h-1zM6 8h1v1h-1zM22 8h1v1h-1zM70 14h1v1h-1zM70 22h1v1h-1zM6 23h1v1h-1zM6 25h1v1h-1zM6 29h1v1h-1zM6 31h1v1h-1zM5 32h1v1h-1zM5 34h1v1h-1zM68 40h1v1h-1zM5 46h1v1h-1zM69 49h1v1h-1zM68 52h1v1h-1z"/>
<path fill="#f80a7c" d="M70 9h1v1h-1zM8 14h1v1h-1zM6 26h1v1h-1zM6 28h1v1h-1zM6 34h1v1h-1zM6 38h1v1h-1zM69 44h1v1h-1zM68 47h1v1h-1zM68 49h1v1h-1zM68 51h1v1h-1zM74 51h1v1h-1zM23 54h1v1h-1zM56 55h1v1h-1zM58 55h2v1h-2zM68 56h1v1h-1z"/>
<path fill="#30f0f0" d="M71 9h1v1h-1zM9 11h1v1h-1zM7 14h1v1h-1zM5 15h2v1h-2zM67 26h3v1h-3zM66 34h1v1h-1zM72 40h1v1h-1zM70 43h1v1h-1zM4 46h1v1h-1zM68 46h1v1h-1zM69 47h1v1h-1zM5 50h1v1h-1zM17 54h1v1h-1zM67 56h1v1h-1z"/>
<path fill="#a8f8f8" d="M71 11h1v1h-1zM5 14h2v1h-2zM9 17h1v1h-1zM68 44h1v1h-1zM70 49h1v1h-1zM66 56h1v1h-1z"/>
<path fill="#4e6432" d="M54 18h1v1h-1zM55 22h1v1h-1zM59 25h1v1h-1zM26 27h1v1h-1zM52 30h1v1h-1zM47 32h1v1h-1zM34 34h1v1h-1zM34 39h1v1h-1zM58 39h1v1h-1zM38 40h1v1h-1zM40 40h1v1h-1zM47 40h1v1h-1zM26 41h1v1h-1zM37 41h1v1h-1zM39 41h2v1h-2zM48 41h1v1h-1zM57 41h2v1h-2zM24 42h2v1h-2zM28 42h1v1h-1zM35 42h2v1h-2zM49 42h3v1h-3zM53 42h3v1h-3zM59 43h1v1h-1z"/>
</svg></div>
<div class="a" style="left:60px;top:220px;width:647px;height:2px;background:#6e6e6e"></div>
<div class="a" style="left:60px;top:737px;width:647px;height:3px;background:#6a6a6a"></div>
<div class="a" style="left:60px;top:220px;width:2px;height:520px;background:#a0103a"></div>
<div class="a" style="left:704.5px;top:220px;width:2.5px;height:520px;background:#c00a48"></div>
<div class="tk" style="left:54px;top:697.2px;width:5px;height:2.5px"></div>
<div class="tk" style="left:710px;top:697.2px;width:5px;height:2.5px"></div>
<div class="tk" style="left:54px;top:652.4px;width:5px;height:2.5px"></div>
<div class="tk" style="left:710px;top:652.4px;width:5px;height:2.5px"></div>
<div class="tk" style="left:54px;top:607.6px;width:5px;height:2.5px"></div>
<div class="tk" style="left:710px;top:607.6px;width:5px;height:2.5px"></div>
<div class="tk" style="left:54px;top:562.8px;width:5px;height:2.5px"></div>
<div class="tk" style="left:710px;top:562.8px;width:5px;height:2.5px"></div>
<div class="tk" style="left:54px;top:518.0px;width:5px;height:2.5px"></div>
<div class="tk" style="left:710px;top:518.0px;width:5px;height:2.5px"></div>
<div class="tk" style="left:54px;top:473.2px;width:5px;height:2.5px"></div>
<div class="tk" style="left:710px;top:473.2px;width:5px;height:2.5px"></div>
<div class="tk" style="left:54px;top:428.4px;width:5px;height:2.5px"></div>
<div class="tk" style="left:710px;top:428.4px;width:5px;height:2.5px"></div>
<div class="tk" style="left:54px;top:383.6px;width:5px;height:2.5px"></div>
<div class="tk" style="left:710px;top:383.6px;width:5px;height:2.5px"></div>
<div class="tk" style="left:54px;top:338.8px;width:5px;height:2.5px"></div>
<div class="tk" style="left:710px;top:338.8px;width:5px;height:2.5px"></div>
<div class="tk" style="left:49px;top:294.0px;width:10px;height:2.5px"></div>
<div class="tk" style="left:710px;top:294.0px;width:10px;height:2.5px"></div>
<div class="tk" style="left:54px;top:249.2px;width:5px;height:2.5px"></div>
<div class="tk" style="left:710px;top:249.2px;width:5px;height:2.5px"></div>
<div class="tk" style="left:100.0px;top:743px;width:3px;height:4px;border-radius:1px"></div>
<div class="tk" style="left:142.2px;top:743px;width:3px;height:4px;border-radius:1px"></div>
<div class="tk" style="left:184.4px;top:743px;width:3px;height:4px;border-radius:1px"></div>
<div class="tk" style="left:226.6px;top:743px;width:3px;height:4px;border-radius:1px"></div>
<div class="tk" style="left:268.8px;top:743px;width:3px;height:4px;border-radius:1px"></div>
<div class="tk" style="left:311.0px;top:743px;width:3px;height:4px;border-radius:1px"></div>
<div class="tk" style="left:353.2px;top:743px;width:3px;height:4px;border-radius:1px"></div>
<div class="tk" style="left:395.4px;top:743px;width:3px;height:4px;border-radius:1px"></div>
<div class="tk" style="left:437.6px;top:743px;width:3px;height:4px;border-radius:1px"></div>
<div class="tk" style="left:479.8px;top:743px;width:3px;height:8px;border-radius:1px"></div>
<div class="tk" style="left:522.0px;top:743px;width:3px;height:4px;border-radius:1px"></div>
<div class="tk" style="left:564.2px;top:743px;width:3px;height:4px;border-radius:1px"></div>
<div class="tk" style="left:606.4px;top:743px;width:3px;height:4px;border-radius:1px"></div>
<div class="tk" style="left:648.6px;top:743px;width:3px;height:4px;border-radius:1px"></div>
<div class="tk" style="left:690.8px;top:743px;width:3px;height:4px;border-radius:1px"></div>
<div class="tk" style="left:48px;top:743px;width:11px;height:2.5px"></div>
<div class="tk" style="left:57px;top:743px;width:2.5px;height:7px"></div>
<div class="tk" style="left:708px;top:743px;width:10px;height:2.5px"></div>
<div class="lab" style="left:58px;top:749px;font-size:22px;transform:scaleX(0.95)">0.0</div>
<div class="lab" style="left:456.5px;top:749px;font-size:22px;transform:scaleX(0.89)">100.0</div>
<div class="lab" style="left:27px;top:774px;font-size:21.5px;transform:rotate(-90deg)">0.0</div>
<div class="lab" style="left:27px;top:320.5px;font-size:21.5px;transform:rotate(-90deg)">100.0</div>
<div class="lab" style="left:715px;top:774px;font-size:21.5px;transform:rotate(-90deg)">0.0</div>
<div class="lab" style="left:715px;top:320px;font-size:21.5px;transform:rotate(-90deg)">100.0</div>
<!-- vertical scrollbar -->
<div class="a" style="left:737px;top:197px;width:33px;height:577px;background:#f6f6f6"></div>
<svg class="a" style="left:745px;top:209px" width="16" height="10"><path d="M2 9L8 3L14 9L8 7.5z" fill="#2a2a2a" stroke="#2a2a2a" stroke-width="1.2" stroke-linejoin="round"/></svg>
<svg class="a" style="left:745px;top:749px" width="16" height="10"><path d="M2 1L8 7L14 1L8 2.5z" fill="#2a2a2a" stroke="#2a2a2a" stroke-width="1.2" stroke-linejoin="round"/></svg>
<div class="a" style="left:737.5px;top:344px;width:28px;height:333px;border:2px solid #9a9a9a;border-radius:3px;background:linear-gradient(90deg,#f4f4f4 0%,#ececec 45%,#d6d6d6 55%,#cfcfcf 100%)"></div>
<div class="a" style="left:745px;top:503px;width:12px;height:2px;background:#3a3a3a;box-shadow:0 4px 0 #3a3a3a,0 8px 0 #3a3a3a"></div>
<!-- horizontal scrollbar -->
<div class="a" style="left:27px;top:774px;width:710px;height:33px;background:#f6f6f6"></div>
<svg class="a" style="left:41px;top:781px" width="12" height="16"><path d="M9 2L3 8L9 14L7.5 8z" fill="#2a2a2a" stroke="#2a2a2a" stroke-width="1.2" stroke-linejoin="round"/></svg>
<svg class="a" style="left:716px;top:781px" width="12" height="16"><path d="M3 2L9 8L3 14L4.5 8z" fill="#2a2a2a" stroke="#2a2a2a" stroke-width="1.2" stroke-linejoin="round"/></svg>
<div class="a" style="left:65.5px;top:774.5px;width:629px;height:29px;border:2px solid #9a9a9a;border-radius:3px;background:linear-gradient(180deg,#f6f6f6 0%,#ededed 45%,#d8d8d8 55%,#d0d0d0 100%)"></div>
<div class="a" style="left:372px;top:782px;width:2px;height:12px;background:#3a3a3a;box-shadow:4px 0 0 #3a3a3a,8px 0 0 #3a3a3a"></div>
<div class="a" style="left:737px;top:774px;width:33px;height:33px;background:#f8f8f8"></div>
<svg class="a" style="left:772px;top:787px" width="16" height="24"><path d="M14 2L2 14M14 8L4 18M14 14L8 20" stroke="#9aa0a6" stroke-width="2"/></svg>

<!-- legend -->
<div class="a" style="left:821.5px;top:-4px;width:200px;height:569.5px;border:2.5px solid #222;background:#fdfdfd"></div>
<div class="a" style="left:830px;top:17.2px;width:75px;height:127.4px;background:linear-gradient(180deg,#c8c8c8 0%,#c8c8c8 6%,#8888e8 10%,#1010f0 15%,#0808e8 21%,#300080 26.5%,#900010 34%,#c00040 38%,#ff0a80 42%,#ff0a80 46%,#8a4050 52.5%,#008000 62.5%,#a0d010 70%,#ffff00 76%,#90f090 83%,#00f0f0 90.5%,#c0f8f8 97.5%,#c0f8f8 100%)"></div>
<div class="tk" style="left:904px;top:16px;width:7px;height:3px"></div>
<div class="tk" style="left:904px;top:79px;width:7px;height:3px"></div>
<div class="tk" style="left:904px;top:141px;width:7px;height:3px"></div>
<div class="db" style="top:0px">-0dB</div>
<div class="db" style="top:63px">-10dB</div>
<div class="db" style="top:126px">-20dB</div>
<div class="db" style="top:190px">-30dB</div>
<div class="db" style="top:253px">-40dB</div>
<div class="db" style="top:317px">-50dB</div>
<div class="db" style="top:380px">-60dB</div>
<div class="db" style="top:443px">-70dB</div>
<div class="db" style="top:507px">-80dB</div>
</div>
</body></html>
